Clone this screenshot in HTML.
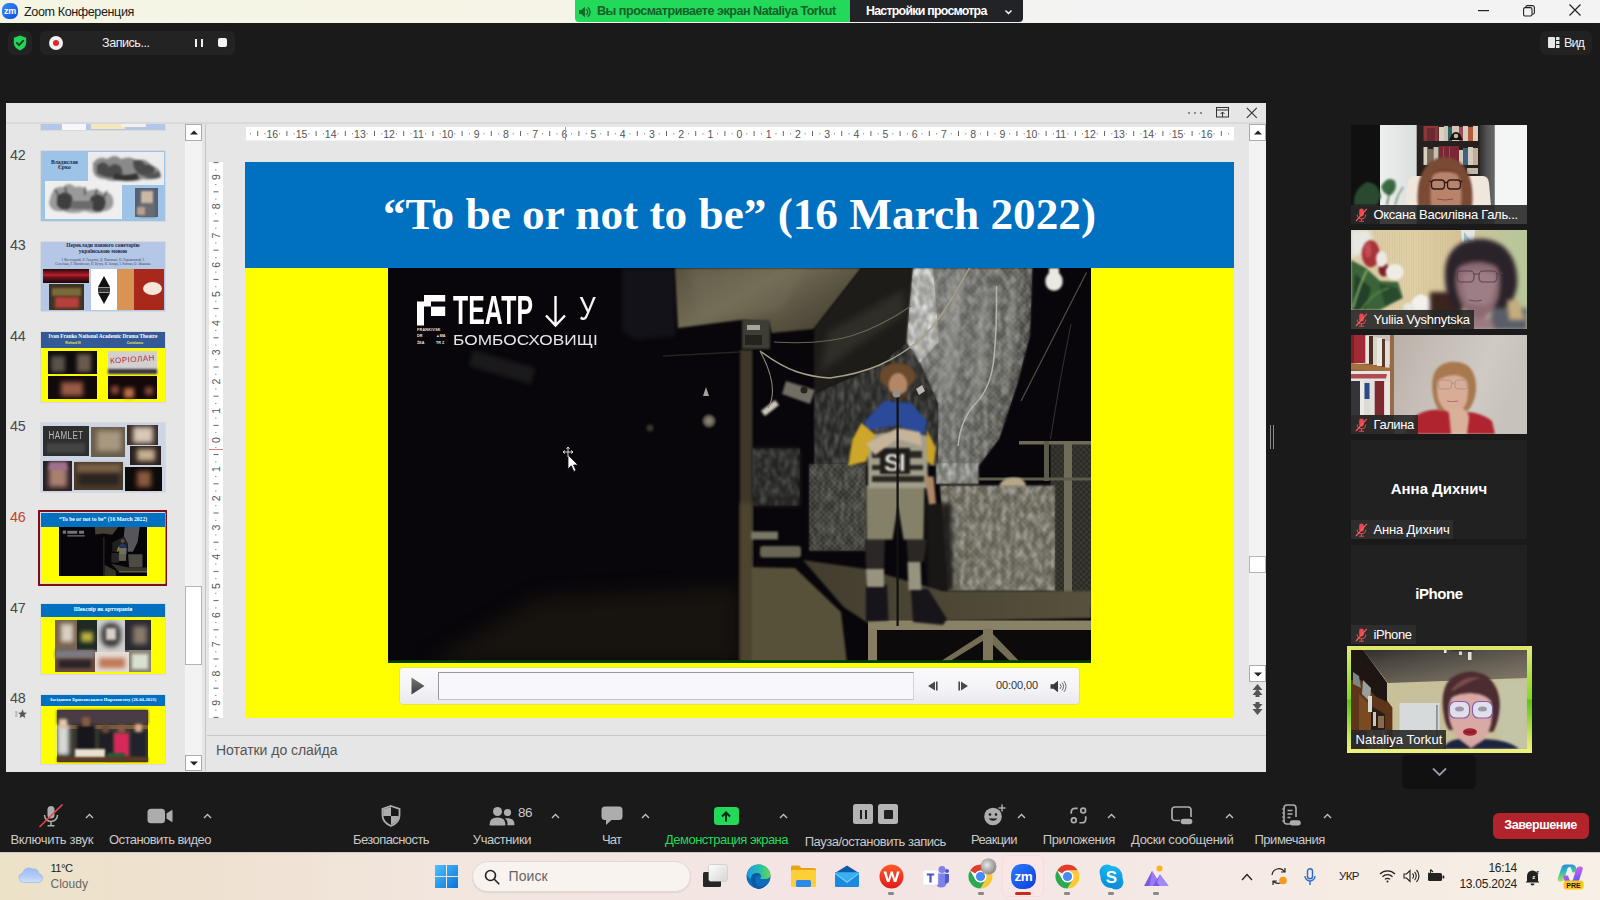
<!DOCTYPE html>
<html lang="ru"><head><meta charset="utf-8"><title>Zoom Конференция</title>
<style>
*{box-sizing:border-box;margin:0;padding:0}
html,body{width:1600px;height:900px;overflow:hidden;background:#1a1a1a;font-family:"Liberation Sans","DejaVu Sans",sans-serif;}
.abs,.abs *{position:absolute}
.t{white-space:nowrap;line-height:1}
.abs span,.abs br{position:static}
#titlebar{left:0;top:0;width:1600px;height:23px;background:linear-gradient(90deg,#f5f5e4 0,#f5f4e6 500px,#f3f3f3 1100px,#f3f3f3 100%)}
#banner{left:575px;top:0;width:275px;height:22px;background:#23d959;border-radius:0 0 0 4px}
#viewset{left:850px;top:0;width:173px;height:22px;background:#222326;border-radius:0 0 4px 0}
#share{left:6px;top:103px;width:1260px;height:669px;background:#e6e6e7;overflow:hidden}
#toolbar{left:0;top:790px;width:1600px;height:62px}
#taskbar{left:0;top:852px;width:1600px;height:48px;background:linear-gradient(90deg,#ece2c8 0,#efe1d0 200px,#f2e6df 450px,#f4e5e5 900px,#f5ebe4 1300px,#f6f0e6 100%)}
</style></head><body>
<div class="abs" style="left:0;top:0;width:1600px;height:900px">
<!--TITLEBAR-->
<div id="titlebar">
<svg style="left:2px;top:3px" width="16" height="16" viewBox="0 0 16 16"><defs><linearGradient id="zg" x1="0" y1="0" x2="1" y2="1"><stop offset="0" stop-color="#3b8bff"/><stop offset="1" stop-color="#0b4fe0"/></linearGradient></defs><rect width="16" height="16" rx="6.5" fill="url(#zg)"/><text x="8" y="11" font-size="9" letter-spacing="-0.300" font-weight="bold" fill="#fff" text-anchor="middle" font-family="Liberation Sans, sans-serif" style="position:static">zm</text></svg>
<div class="t" id="ttl" style="left:24px;top:5.800px;font-size:12.6px;color:#1a1a1a;letter-spacing:-0.4px">Zoom Конференция</div>
<svg style="left:1478px;top:10px" width="12" height="2"><rect width="11" height="1.2" fill="#222"/></svg>
<svg style="left:1523px;top:5px" width="12" height="12" viewBox="0 0 12 12" fill="none" stroke="#222" stroke-width="1.1"><rect x="0.6" y="2.6" width="8.4" height="8.4" rx="1.6"/><path d="M2.8 2.4V2.2a1.6 1.6 0 0 1 1.6-1.6h5a2 2 0 0 1 2 2v5a1.6 1.6 0 0 1-1.6 1.6H9.2"/></svg>
<svg style="left:1569px;top:4px" width="12" height="12" viewBox="0 0 12 12" stroke="#222" stroke-width="1.2"><path d="M0.5 0.5l11 11M11.500 0.500l-11 11"/></svg>
</div>
<!--BANNER-->
<div id="banner">
<svg style="left:3px;top:4.500px" width="14" height="14" viewBox="0 0 14 14"><path d="M1 5h2.3L7 1.8v10.400L3.300 9H1z" fill="#17672c"/><path d="M8.600 4.500a3.300 3.300 0 0 1 0 5M10.200 2.800a5.600 5.600 0 0 1 0 8.400" stroke="#17672c" stroke-width="1.300" fill="none" stroke-linecap="round"/></svg>
<div class="t" id="bt" style="left:22px;top:5px;font-size:12.6px;font-weight:bold;color:#15602a;letter-spacing:-0.5px">Вы просматриваете экран Nataliya Torkut</div>
</div>
<div id="viewset">
<div class="t" id="vs" style="left:16px;top:5px;font-size:12.4px;font-weight:bold;color:#fff;letter-spacing:-0.76px">Настройки просмотра</div>
<svg style="left:154px;top:8.500px" width="9" height="7" viewBox="0 0 9 7"><path d="M1.500 1.500l3 3 3-3" stroke="#fff" stroke-width="1.400" fill="none"/></svg>
</div>
<!--PILLS-->
<div style="left:8px;top:31px;width:24px;height:24px;background:#232323;border-radius:6px">
<svg style="left:5px;top:4px" width="14" height="16" viewBox="0 0 14 16"><path d="M7 0.600L13.200 2.800v5c0 3.600-2.600 6.200-6.200 7.600C3.400 14 0.800 11.400 0.800 7.800v-5z" fill="#26d35a"/><path d="M3.800 7.800l2.300 2.400 4.200-4.500" stroke="#0d3d1a" stroke-width="1.700" fill="none" stroke-linecap="round" stroke-linejoin="round"/></svg>
</div>
<div style="left:40px;top:31px;width:195px;height:24px;background:#232323;border-radius:6px">
<div style="left:9px;top:5px;width:14px;height:14px;border-radius:50%;background:#f2f2f2"></div>
<div style="left:13px;top:9px;width:6px;height:6px;border-radius:50%;background:#e02828"></div>
<div class="t" id="rec" style="left:62px;top:6.200px;font-size:12.6px;color:#f0f0f0;letter-spacing:-0.48px">Запись...</div>
<div style="left:155px;top:8px;width:2px;height:8px;background:#f0f0f0"></div>
<div style="left:161px;top:8px;width:2px;height:8px;background:#f0f0f0"></div>
<div style="left:178px;top:7px;width:9px;height:9px;border-radius:2px;background:#f4f4f4"></div>
</div>
<div style="left:1540px;top:31px;width:52px;height:24px;background:#222;border-radius:6px">
<svg style="left:8px;top:6px" width="12" height="11" viewBox="0 0 12 11"><rect x="0" y="0" width="7" height="11" rx="1" fill="#e8e8e8"/><rect x="8" y="0" width="3.500" height="3" rx="0.500" fill="#e8e8e8"/><rect x="8" y="4" width="3.500" height="3" rx="0.500" fill="#e8e8e8"/><rect x="8" y="8" width="3.500" height="3" rx="0.500" fill="#e8e8e8"/></svg>
<div class="t" id="vid" style="left:24px;top:6.200px;font-size:12.6px;color:#f0f0f0;letter-spacing:-0.93px">Вид</div>
</div>
<!--SHARE-->
<div id="share">
<div style="left:0px;top:19px;width:1260px;height:1.5px;background:#d9d9d9;"></div>
<svg style="left:1181px;top:8px" width="16" height="4"><circle cx="2" cy="2" r="1.100" fill="#777"/><circle cx="8" cy="2" r="1.100" fill="#777"/><circle cx="14" cy="2" r="1.100" fill="#777"/></svg>
<svg style="left:1210px;top:4px" width="14" height="12" viewBox="0 0 14 12" fill="none" stroke="#333" stroke-width="1"><rect x="0.5" y="0.5" width="12" height="9.500"/><path d="M0.5 3h12M6.500 10V5.200M4.500 7l2-2 2 2"/></svg>
<svg style="left:1240px;top:4px" width="12" height="12" viewBox="0 0 12 12" stroke="#333" stroke-width="1.100"><path d="M0.800 0.800l10 10M10.800 0.800l-10 10"/></svg>
<div style="left:179px;top:21px;width:17px;height:647px;background:#f3f3f3;"></div>
<div style="left:179px;top:21px;width:17px;height:16.5px;background:#fff;border:1px solid #ababab"></div>
<svg style="left:184px;top:27px" width="8" height="5"><path d="M0 4.500L4 0.500 8 4.500z" fill="#222"/></svg>
<div style="left:179px;top:483px;width:17px;height:79px;background:#fff;border:1px solid #b5b5b5"></div>
<div style="left:179px;top:651.5px;width:17px;height:16.5px;background:#fff;border:1px solid #ababab"></div>
<svg style="left:184px;top:658px" width="8" height="5"><path d="M0 0.500L4 4.500 8 0.500z" fill="#222"/></svg>
<div style="left:199px;top:21px;width:1.2px;height:647px;background:#c6c6c6;"></div>
<div style="left:1243px;top:21px;width:16.500px;height:558px;background:#f3f3f3;"></div>
<div style="left:1243px;top:21px;width:17px;height:16.5px;background:#fff;border:1px solid #ababab"></div>
<svg style="left:1247.500px;top:27px" width="8" height="5"><path d="M0 4.500L4 0.500 8 4.500z" fill="#222"/></svg>
<div style="left:1243px;top:453px;width:17px;height:17px;background:#fff;border:1px solid #b5b5b5"></div>
<div style="left:1243px;top:562px;width:17px;height:16.5px;background:#fff;border:1px solid #ababab"></div>
<svg style="left:1247.500px;top:568.500px" width="8" height="5"><path d="M0 0.500L4 4.500 8 0.500z" fill="#222"/></svg>
<svg style="left:1246px;top:581px" width="11" height="31" viewBox="0 0 11 31" fill="#555"><path d="M5.500 0L10.500 6H0.500zM5.500 5L10.500 11H0.500z"/><rect x="3.500" y="10" width="4" height="3"/><path d="M5.500 31L10.500 25H0.500zM5.500 26L10.500 20H0.500z"/><rect x="3.500" y="18" width="4" height="3"/></svg>
<div style="left:201px;top:632px;width:1059px;height:1px;background:#c8c8c8;"></div>
<div class="t" id="notes" style="left:210px;top:640px;font-size:14px;color:#555;letter-spacing:-0.04px">Нотатки до слайда</div>
<svg style="left:240px;top:24px" width="988" height="13.500" font-family="Liberation Sans, sans-serif" font-size="10.500" fill="#555"><rect width="988" height="13.500" fill="#fff"/>
<text x="26.3" y="11.200" text-anchor="middle" style="position:static">16</text>
<text x="55.5" y="11.200" text-anchor="middle" style="position:static">15</text>
<text x="84.7" y="11.200" text-anchor="middle" style="position:static">14</text>
<text x="113.9" y="11.200" text-anchor="middle" style="position:static">13</text>
<text x="143.1" y="11.200" text-anchor="middle" style="position:static">12</text>
<text x="172.3" y="11.200" text-anchor="middle" style="position:static">11</text>
<text x="201.5" y="11.200" text-anchor="middle" style="position:static">10</text>
<text x="230.7" y="11.200" text-anchor="middle" style="position:static">9</text>
<text x="259.9" y="11.200" text-anchor="middle" style="position:static">8</text>
<text x="289.1" y="11.200" text-anchor="middle" style="position:static">7</text>
<text x="318.3" y="11.200" text-anchor="middle" style="position:static">6</text>
<text x="347.5" y="11.200" text-anchor="middle" style="position:static">5</text>
<text x="376.7" y="11.200" text-anchor="middle" style="position:static">4</text>
<text x="405.9" y="11.200" text-anchor="middle" style="position:static">3</text>
<text x="435.1" y="11.200" text-anchor="middle" style="position:static">2</text>
<text x="464.3" y="11.200" text-anchor="middle" style="position:static">1</text>
<text x="493.5" y="11.200" text-anchor="middle" style="position:static">0</text>
<text x="522.7" y="11.200" text-anchor="middle" style="position:static">1</text>
<text x="551.9" y="11.200" text-anchor="middle" style="position:static">2</text>
<text x="581.1" y="11.200" text-anchor="middle" style="position:static">3</text>
<text x="610.3" y="11.200" text-anchor="middle" style="position:static">4</text>
<text x="639.5" y="11.200" text-anchor="middle" style="position:static">5</text>
<text x="668.7" y="11.200" text-anchor="middle" style="position:static">6</text>
<text x="697.9" y="11.200" text-anchor="middle" style="position:static">7</text>
<text x="727.1" y="11.200" text-anchor="middle" style="position:static">8</text>
<text x="756.3" y="11.200" text-anchor="middle" style="position:static">9</text>
<text x="785.5" y="11.200" text-anchor="middle" style="position:static">10</text>
<text x="814.7" y="11.200" text-anchor="middle" style="position:static">11</text>
<text x="843.9" y="11.200" text-anchor="middle" style="position:static">12</text>
<text x="873.1" y="11.200" text-anchor="middle" style="position:static">13</text>
<text x="902.3" y="11.200" text-anchor="middle" style="position:static">14</text>
<text x="931.5" y="11.200" text-anchor="middle" style="position:static">15</text>
<text x="960.7" y="11.200" text-anchor="middle" style="position:static">16</text>
<rect x="11.2" y="4" width="1" height="5" fill="#666"/>
<rect x="40.4" y="4" width="1" height="5" fill="#666"/>
<rect x="69.6" y="4" width="1" height="5" fill="#666"/>
<rect x="98.8" y="4" width="1" height="5" fill="#666"/>
<rect x="128.0" y="4" width="1" height="5" fill="#666"/>
<rect x="157.2" y="4" width="1" height="5" fill="#666"/>
<rect x="186.4" y="4" width="1" height="5" fill="#666"/>
<rect x="215.6" y="4" width="1" height="5" fill="#666"/>
<rect x="244.8" y="4" width="1" height="5" fill="#666"/>
<rect x="274.0" y="4" width="1" height="5" fill="#666"/>
<rect x="303.2" y="4" width="1" height="5" fill="#666"/>
<rect x="332.4" y="4" width="1" height="5" fill="#666"/>
<rect x="361.6" y="4" width="1" height="5" fill="#666"/>
<rect x="390.8" y="4" width="1" height="5" fill="#666"/>
<rect x="420.0" y="4" width="1" height="5" fill="#666"/>
<rect x="449.2" y="4" width="1" height="5" fill="#666"/>
<rect x="478.4" y="4" width="1" height="5" fill="#666"/>
<rect x="507.6" y="4" width="1" height="5" fill="#666"/>
<rect x="536.8" y="4" width="1" height="5" fill="#666"/>
<rect x="566.0" y="4" width="1" height="5" fill="#666"/>
<rect x="595.2" y="4" width="1" height="5" fill="#666"/>
<rect x="624.4" y="4" width="1" height="5" fill="#666"/>
<rect x="653.6" y="4" width="1" height="5" fill="#666"/>
<rect x="682.8" y="4" width="1" height="5" fill="#666"/>
<rect x="712.0" y="4" width="1" height="5" fill="#666"/>
<rect x="741.2" y="4" width="1" height="5" fill="#666"/>
<rect x="770.4" y="4" width="1" height="5" fill="#666"/>
<rect x="799.6" y="4" width="1" height="5" fill="#666"/>
<rect x="828.8" y="4" width="1" height="5" fill="#666"/>
<rect x="858.0" y="4" width="1" height="5" fill="#666"/>
<rect x="887.2" y="4" width="1" height="5" fill="#666"/>
<rect x="916.4" y="4" width="1" height="5" fill="#666"/>
<rect x="945.6" y="4" width="1" height="5" fill="#666"/>
<rect x="974.8" y="4" width="1" height="5" fill="#666"/>
<rect x="3.9" y="6" width="1" height="1.500" fill="#999"/>
<rect x="18.5" y="6" width="1" height="1.500" fill="#999"/>
<rect x="33.1" y="6" width="1" height="1.500" fill="#999"/>
<rect x="47.7" y="6" width="1" height="1.500" fill="#999"/>
<rect x="62.3" y="6" width="1" height="1.500" fill="#999"/>
<rect x="76.9" y="6" width="1" height="1.500" fill="#999"/>
<rect x="91.5" y="6" width="1" height="1.500" fill="#999"/>
<rect x="106.1" y="6" width="1" height="1.500" fill="#999"/>
<rect x="120.7" y="6" width="1" height="1.500" fill="#999"/>
<rect x="135.3" y="6" width="1" height="1.500" fill="#999"/>
<rect x="149.9" y="6" width="1" height="1.500" fill="#999"/>
<rect x="164.5" y="6" width="1" height="1.500" fill="#999"/>
<rect x="179.1" y="6" width="1" height="1.500" fill="#999"/>
<rect x="193.7" y="6" width="1" height="1.500" fill="#999"/>
<rect x="208.3" y="6" width="1" height="1.500" fill="#999"/>
<rect x="222.9" y="6" width="1" height="1.500" fill="#999"/>
<rect x="237.5" y="6" width="1" height="1.500" fill="#999"/>
<rect x="252.1" y="6" width="1" height="1.500" fill="#999"/>
<rect x="266.7" y="6" width="1" height="1.500" fill="#999"/>
<rect x="281.3" y="6" width="1" height="1.500" fill="#999"/>
<rect x="295.9" y="6" width="1" height="1.500" fill="#999"/>
<rect x="310.5" y="6" width="1" height="1.500" fill="#999"/>
<rect x="325.1" y="6" width="1" height="1.500" fill="#999"/>
<rect x="339.7" y="6" width="1" height="1.500" fill="#999"/>
<rect x="354.3" y="6" width="1" height="1.500" fill="#999"/>
<rect x="368.9" y="6" width="1" height="1.500" fill="#999"/>
<rect x="383.5" y="6" width="1" height="1.500" fill="#999"/>
<rect x="398.1" y="6" width="1" height="1.500" fill="#999"/>
<rect x="412.7" y="6" width="1" height="1.500" fill="#999"/>
<rect x="427.3" y="6" width="1" height="1.500" fill="#999"/>
<rect x="441.9" y="6" width="1" height="1.500" fill="#999"/>
<rect x="456.5" y="6" width="1" height="1.500" fill="#999"/>
<rect x="471.1" y="6" width="1" height="1.500" fill="#999"/>
<rect x="485.7" y="6" width="1" height="1.500" fill="#999"/>
<rect x="500.3" y="6" width="1" height="1.500" fill="#999"/>
<rect x="514.9" y="6" width="1" height="1.500" fill="#999"/>
<rect x="529.5" y="6" width="1" height="1.500" fill="#999"/>
<rect x="544.1" y="6" width="1" height="1.500" fill="#999"/>
<rect x="558.7" y="6" width="1" height="1.500" fill="#999"/>
<rect x="573.3" y="6" width="1" height="1.500" fill="#999"/>
<rect x="587.9" y="6" width="1" height="1.500" fill="#999"/>
<rect x="602.5" y="6" width="1" height="1.500" fill="#999"/>
<rect x="617.1" y="6" width="1" height="1.500" fill="#999"/>
<rect x="631.7" y="6" width="1" height="1.500" fill="#999"/>
<rect x="646.3" y="6" width="1" height="1.500" fill="#999"/>
<rect x="660.9" y="6" width="1" height="1.500" fill="#999"/>
<rect x="675.5" y="6" width="1" height="1.500" fill="#999"/>
<rect x="690.1" y="6" width="1" height="1.500" fill="#999"/>
<rect x="704.7" y="6" width="1" height="1.500" fill="#999"/>
<rect x="719.3" y="6" width="1" height="1.500" fill="#999"/>
<rect x="733.9" y="6" width="1" height="1.500" fill="#999"/>
<rect x="748.5" y="6" width="1" height="1.500" fill="#999"/>
<rect x="763.1" y="6" width="1" height="1.500" fill="#999"/>
<rect x="777.7" y="6" width="1" height="1.500" fill="#999"/>
<rect x="792.3" y="6" width="1" height="1.500" fill="#999"/>
<rect x="806.9" y="6" width="1" height="1.500" fill="#999"/>
<rect x="821.5" y="6" width="1" height="1.500" fill="#999"/>
<rect x="836.1" y="6" width="1" height="1.500" fill="#999"/>
<rect x="850.7" y="6" width="1" height="1.500" fill="#999"/>
<rect x="865.3" y="6" width="1" height="1.500" fill="#999"/>
<rect x="879.9" y="6" width="1" height="1.500" fill="#999"/>
<rect x="894.5" y="6" width="1" height="1.500" fill="#999"/>
<rect x="909.1" y="6" width="1" height="1.500" fill="#999"/>
<rect x="923.7" y="6" width="1" height="1.500" fill="#999"/>
<rect x="938.3" y="6" width="1" height="1.500" fill="#999"/>
<rect x="952.9" y="6" width="1" height="1.500" fill="#999"/>
<rect x="967.5" y="6" width="1" height="1.500" fill="#999"/>
<rect x="982.1" y="6" width="1" height="1.500" fill="#999"/>
<rect x="319" y="0" width="1" height="13.500" fill="#e08080"/>
</svg>
<svg style="left:203px;top:59px" width="14" height="556" font-family="Liberation Sans, sans-serif" font-size="10.500" fill="#555"><rect width="14" height="556" fill="#fff"/>
<text transform="translate(11.200,15.2) rotate(-90)" text-anchor="middle" style="position:static">9</text>
<text transform="translate(11.200,44.4) rotate(-90)" text-anchor="middle" style="position:static">8</text>
<text transform="translate(11.200,73.6) rotate(-90)" text-anchor="middle" style="position:static">7</text>
<text transform="translate(11.200,102.8) rotate(-90)" text-anchor="middle" style="position:static">6</text>
<text transform="translate(11.200,132.0) rotate(-90)" text-anchor="middle" style="position:static">5</text>
<text transform="translate(11.200,161.2) rotate(-90)" text-anchor="middle" style="position:static">4</text>
<text transform="translate(11.200,190.4) rotate(-90)" text-anchor="middle" style="position:static">3</text>
<text transform="translate(11.200,219.6) rotate(-90)" text-anchor="middle" style="position:static">2</text>
<text transform="translate(11.200,248.8) rotate(-90)" text-anchor="middle" style="position:static">1</text>
<text transform="translate(11.200,278.0) rotate(-90)" text-anchor="middle" style="position:static">0</text>
<text transform="translate(11.200,307.2) rotate(-90)" text-anchor="middle" style="position:static">1</text>
<text transform="translate(11.200,336.4) rotate(-90)" text-anchor="middle" style="position:static">2</text>
<text transform="translate(11.200,365.6) rotate(-90)" text-anchor="middle" style="position:static">3</text>
<text transform="translate(11.200,394.8) rotate(-90)" text-anchor="middle" style="position:static">4</text>
<text transform="translate(11.200,424.0) rotate(-90)" text-anchor="middle" style="position:static">5</text>
<text transform="translate(11.200,453.2) rotate(-90)" text-anchor="middle" style="position:static">6</text>
<text transform="translate(11.200,482.4) rotate(-90)" text-anchor="middle" style="position:static">7</text>
<text transform="translate(11.200,511.6) rotate(-90)" text-anchor="middle" style="position:static">8</text>
<text transform="translate(11.200,540.8) rotate(-90)" text-anchor="middle" style="position:static">9</text>
<rect x="4.500" y="0.1" width="5" height="1" fill="#666"/>
<rect x="4.500" y="29.3" width="5" height="1" fill="#666"/>
<rect x="4.500" y="58.5" width="5" height="1" fill="#666"/>
<rect x="4.500" y="87.7" width="5" height="1" fill="#666"/>
<rect x="4.500" y="116.9" width="5" height="1" fill="#666"/>
<rect x="4.500" y="146.1" width="5" height="1" fill="#666"/>
<rect x="4.500" y="175.3" width="5" height="1" fill="#666"/>
<rect x="4.500" y="204.5" width="5" height="1" fill="#666"/>
<rect x="4.500" y="233.7" width="5" height="1" fill="#666"/>
<rect x="4.500" y="262.9" width="5" height="1" fill="#666"/>
<rect x="4.500" y="292.1" width="5" height="1" fill="#666"/>
<rect x="4.500" y="321.3" width="5" height="1" fill="#666"/>
<rect x="4.500" y="350.5" width="5" height="1" fill="#666"/>
<rect x="4.500" y="379.7" width="5" height="1" fill="#666"/>
<rect x="4.500" y="408.9" width="5" height="1" fill="#666"/>
<rect x="4.500" y="438.1" width="5" height="1" fill="#666"/>
<rect x="4.500" y="467.3" width="5" height="1" fill="#666"/>
<rect x="4.500" y="496.5" width="5" height="1" fill="#666"/>
<rect x="4.500" y="525.7" width="5" height="1" fill="#666"/>
<rect x="4.500" y="554.9" width="5" height="1" fill="#666"/>
<rect x="6" y="7.4" width="1.500" height="1" fill="#999"/>
<rect x="6" y="22.0" width="1.500" height="1" fill="#999"/>
<rect x="6" y="36.6" width="1.500" height="1" fill="#999"/>
<rect x="6" y="51.2" width="1.500" height="1" fill="#999"/>
<rect x="6" y="65.8" width="1.500" height="1" fill="#999"/>
<rect x="6" y="80.4" width="1.500" height="1" fill="#999"/>
<rect x="6" y="95.0" width="1.500" height="1" fill="#999"/>
<rect x="6" y="109.6" width="1.500" height="1" fill="#999"/>
<rect x="6" y="124.2" width="1.500" height="1" fill="#999"/>
<rect x="6" y="138.8" width="1.500" height="1" fill="#999"/>
<rect x="6" y="153.4" width="1.500" height="1" fill="#999"/>
<rect x="6" y="168.0" width="1.500" height="1" fill="#999"/>
<rect x="6" y="182.6" width="1.500" height="1" fill="#999"/>
<rect x="6" y="197.2" width="1.500" height="1" fill="#999"/>
<rect x="6" y="211.8" width="1.500" height="1" fill="#999"/>
<rect x="6" y="226.4" width="1.500" height="1" fill="#999"/>
<rect x="6" y="241.0" width="1.500" height="1" fill="#999"/>
<rect x="6" y="255.6" width="1.500" height="1" fill="#999"/>
<rect x="6" y="270.2" width="1.500" height="1" fill="#999"/>
<rect x="6" y="284.8" width="1.500" height="1" fill="#999"/>
<rect x="6" y="299.4" width="1.500" height="1" fill="#999"/>
<rect x="6" y="314.0" width="1.500" height="1" fill="#999"/>
<rect x="6" y="328.6" width="1.500" height="1" fill="#999"/>
<rect x="6" y="343.2" width="1.500" height="1" fill="#999"/>
<rect x="6" y="357.8" width="1.500" height="1" fill="#999"/>
<rect x="6" y="372.4" width="1.500" height="1" fill="#999"/>
<rect x="6" y="387.0" width="1.500" height="1" fill="#999"/>
<rect x="6" y="401.6" width="1.500" height="1" fill="#999"/>
<rect x="6" y="416.2" width="1.500" height="1" fill="#999"/>
<rect x="6" y="430.8" width="1.500" height="1" fill="#999"/>
<rect x="6" y="445.4" width="1.500" height="1" fill="#999"/>
<rect x="6" y="460.0" width="1.500" height="1" fill="#999"/>
<rect x="6" y="474.6" width="1.500" height="1" fill="#999"/>
<rect x="6" y="489.2" width="1.500" height="1" fill="#999"/>
<rect x="6" y="503.8" width="1.500" height="1" fill="#999"/>
<rect x="6" y="518.4" width="1.500" height="1" fill="#999"/>
<rect x="6" y="533.0" width="1.500" height="1" fill="#999"/>
<rect x="6" y="547.6" width="1.500" height="1" fill="#999"/>
<rect x="0" y="287" width="14" height="1" fill="#e08080"/>
</svg>
<div id="slide" style="left:239px;top:59px;width:989px;height:556px;background:#ffff00;overflow:hidden">
<div style="left:0;top:0;width:989px;height:106px;background:#0070c0"></div>
<div class="t" id="stitle" style="left:0;top:29.500px;width:989px;text-align:center;font-family:'Liberation Serif',serif;font-weight:bold;font-size:45.250px;color:#fff">“To be or not to be” (16 March 2022)</div>
<div id="video" style="left:143px;top:106px;width:703px;height:395px;background:#09060b;overflow:hidden">
<svg id="scene" style="left:0;top:0" width="703" height="395" viewBox="0 0 703 395">
<defs>
<filter id="b1" color-interpolation-filters="sRGB" x="-10%" y="-10%" width="120%" height="120%"><feGaussianBlur stdDeviation="1.100"/></filter>
<filter id="b2" color-interpolation-filters="sRGB" x="-10%" y="-10%" width="120%" height="120%"><feGaussianBlur stdDeviation="2"/></filter>
<filter id="b3" color-interpolation-filters="sRGB" x="-15%" y="-15%" width="130%" height="130%"><feGaussianBlur stdDeviation="3.500"/></filter>
<filter id="b8" color-interpolation-filters="sRGB" x="-20%" y="-20%" width="140%" height="140%"><feGaussianBlur stdDeviation="9"/></filter>
<filter id="foil" color-interpolation-filters="sRGB" x="0" y="0" width="100%" height="100%"><feTurbulence type="fractalNoise" baseFrequency="0.220 0.110" numOctaves="3" seed="11" result="n"/><feColorMatrix in="n" type="matrix" values="0 0 0 0 1  0 0 0 0 1  0 0 0 0 1  2.200 0 0 0 -0.800" result="m"/><feGaussianBlur in="m" stdDeviation="0.900" result="mb"/><feComposite in="mb" in2="SourceGraphic" operator="in"/></filter>
<filter id="foil2" color-interpolation-filters="sRGB" x="0" y="0" width="100%" height="100%"><feTurbulence type="fractalNoise" baseFrequency="0.300 0.090" numOctaves="3" seed="4" result="n"/><feColorMatrix in="n" type="matrix" values="0 0 0 0 1  0 0 0 0 1  0 0 0 0 1  2.200 0 0 0 -0.850" result="m"/><feGaussianBlur in="m" stdDeviation="1" result="mb"/><feComposite in="mb" in2="SourceGraphic" operator="in"/></filter>
<linearGradient id="ductg" x1="0" y1="0" x2="1" y2="0.300"><stop offset="0" stop-color="#6c6c69"/><stop offset="0.450" stop-color="#62625f"/><stop offset="0.800" stop-color="#55554f"/><stop offset="1" stop-color="#3c3c39"/></linearGradient>
<linearGradient id="ceilg" x1="0" y1="0" x2="1" y2="0.600"><stop offset="0" stop-color="#57523f"/><stop offset="0.450" stop-color="#726c56"/><stop offset="1" stop-color="#474233"/></linearGradient>
<linearGradient id="platg" x1="0" y1="0" x2="1" y2="0"><stop offset="0" stop-color="#423d2e"/><stop offset="1" stop-color="#57523d"/></linearGradient>
<pattern id="mesh" width="4" height="4" patternUnits="userSpaceOnUse" patternTransform="rotate(45)"><path d="M0 0H4M0 0V4" stroke="#8a8878" stroke-width="0.500" opacity="0.550"/></pattern>
</defs>
<rect width="703" height="395" fill="#08060a"/>
<path d="M40 395L150 330 352 318V395z" fill="#17130f" filter="url(#b8)"/>
<path d="M234 0h53v68l-38 4-15-8z" fill="#141219" filter="url(#b2)"/>
<path d="M85 82l62 18-4 16-62-18z" fill="#1a1a1b" filter="url(#b2)"/>
<path d="M287 0H473.500L426 61 383.500 65 381 54 352 52 290 60z" fill="url(#ceilg)" filter="url(#b1)"/>
<path d="M300 2h120l-28 40-80 8z" fill="#77725b" opacity="0.350" filter="url(#b3)"/>
<path d="M473.500 0H525L518.500 74 491.500 97 426 126V61z" fill="#1d1c19" filter="url(#b1)"/>
<path d="M440 64L515 22 517 46 432 104z" fill="#3b3a33" opacity="0.600" filter="url(#b3)"/>
<path d="M426 126L491.500 97 518.500 74 532 94.500 550 135V198H426z" fill="#262624" filter="url(#b1)"/>
<path d="M426 126L491.500 97 518.500 74 532 94.500 550 135V198H426z" fill="#6a6a64" filter="url(#foil2)" opacity="0.280"/>
<path d="M543 0H644.500L642 67.500 629 117 611 171 590.500 198H550V135L532 94.500 550 74z" fill="url(#ductg)" filter="url(#b1)"/>
<path d="M543 0H644.500L642 67.500 629 117 611 171 590.500 198H550V135L532 94.500 550 74z" fill="url(#mesh)"/>
<path d="M543 0H644.500L642 67.500 629 117 611 171 590.500 198H550V135L532 94.500 550 74z" fill="#d6d6d0" filter="url(#foil)" opacity="0.380"/>
<path d="M560 10L575 6 566 120 552 128zM592 30l10-4-6 90-14 40zM622 20l8 0-4 70-12 40z" fill="#b4b4ae" opacity="0.350" filter="url(#b2)"/>
<path d="M525 0H545L551 74 532 95 518.500 74z" fill="#9a9a96" filter="url(#b1)"/>
<path d="M525 0H545L551 74 532 95 518.500 74z" fill="#f4f4f0" filter="url(#foil)" opacity="0.800"/>
<path d="M698.500 4.500L633 133" stroke="#56534a" stroke-width="1.100" fill="none"/>
<path d="M683 56Q672 110 662.500 171" stroke="#34322d" stroke-width="1" fill="none"/>
<path d="M662.500 175H703V339H662.500z" fill="#2c2b25"/>
<path d="M662.500 175H703V339H662.500z" fill="url(#mesh)"/>
<path d="M631 173H703v3.500H631z" fill="#6d6a58"/>
<rect x="676" y="173" width="8" height="166" fill="#6f6c5a"/><rect x="656" y="173" width="5" height="40" fill="#5c5a4a"/>
<path d="M552 217.500H667V323H560z" fill="#615e52" filter="url(#b1)"/>
<path d="M552 217.500H667V323H560z" fill="url(#mesh)"/>
<path d="M552 217.500H667V323H560z" fill="#d4d2c6" filter="url(#foil)" opacity="0.450"/>
<path d="M548 195H590.500V216H548z" fill="#74746e" filter="url(#b1)"/><path d="M548 195H590.500V216H548z" fill="#e0e0da" filter="url(#foil)" opacity="0.600"/>
<rect x="590" y="209.500" width="113" height="3" fill="#5d5b4b"/>
<path d="M611 218.500q3-9 14-9 12-1 13 9z" fill="#b6a78a" filter="url(#b1)"/>
<path d="M536.500 235H563L566 323H540z" fill="#1b1917" filter="url(#b2)" opacity="0.900"/>
<path d="M421 196H478V283H421z" fill="#34342f" filter="url(#b1)"/><path d="M421 196H478V283H421z" fill="url(#mesh)"/><path d="M421 196H478V283H421z" fill="#8e8e86" filter="url(#foil2)" opacity="0.260"/>
<path d="M364 180h48v58H364z" fill="#242422" filter="url(#b2)"/><path d="M364 180h48v58H364z" fill="#b0b0a8" filter="url(#foil)" opacity="0.200"/>

<rect x="352" y="82" width="12.500" height="313" fill="#3f3727" filter="url(#b1)"/><rect x="352" y="235" width="12.500" height="160" fill="#4d4530" filter="url(#b2)"/>
<rect x="354" y="52" width="28" height="29" fill="#3f3e36" filter="url(#b1)"/><rect x="359" y="57" width="13" height="5" fill="#a5a59c"/><rect x="357" y="67" width="17" height="10" fill="#24241f"/>
<path d="M373 143l14-11 4 5-14 11z" fill="#cbc8ba" filter="url(#b1)"/>
<path d="M398 113l29 9-5 14-28-10z" fill="#716e64" filter="url(#b1)"/><circle cx="416" cy="122" r="3.500" fill="#26241f"/>
<circle cx="321" cy="153" r="6.500" fill="#5e5a4f" filter="url(#b1)"/><circle cx="321" cy="153" r="3.500" fill="#85816f" filter="url(#b1)"/>
<circle cx="262" cy="160" r="3.500" fill="#37352f" filter="url(#b1)"/>
<path d="M315 128l3-9 3 9z" fill="#a6a498"/>
<path d="M581.500 0Q566 28 554.500 45T532 72Q512 88 491.500 97T442 110Q424 109 408 103.500T372 83" stroke="#a8a088" stroke-width="1.400" fill="none"/>
<path d="M523 38Q494 58 464.500 67.500T386 74" stroke="#6a6553" stroke-width="1.100" fill="none"/>
<path d="M372 83Q392 120 380 140" stroke="#8b8573" stroke-width="1.100" fill="none"/>
<path d="M608.500 18Q609 60 606 90T588 135 570 178" stroke="#b5b5ae" stroke-width="1.500" fill="none"/>
<path d="M275 88L352 84" stroke="#26241f" stroke-width="1.500"/>
<path d="M661 0h10v5q4.500 4 3.500 10.500a8.600 8.600 0 0 1-17 0Q656.500 9 661 5z" fill="#ebe8e2" filter="url(#b1)"/>
<path d="M363 299L407 300 453 344 459 395H363z" fill="#575139" filter="url(#b1)"/>
<path d="M415 292L478 301 554.500 323H703V350L480 355 455.500 339z" fill="url(#platg)" filter="url(#b1)"/>
<rect x="363" y="263.500" width="27" height="8" fill="#7a7866" filter="url(#b1)"/><rect x="372" y="278" width="41" height="11.500" rx="3" fill="#6a6656" filter="url(#b1)"/>
<rect x="480" y="363" width="223" height="32" fill="#0c0a0a"/>
<path d="M595 366L550 395h9L603 368zM605 366L633 395h-9L598 370z" fill="#746d55"/>
<rect x="480" y="352.500" width="223" height="9.500" fill="#8a8266"/>
<rect x="480" y="361" width="9" height="34" fill="#857d62"/><rect x="595" y="361" width="10" height="34" fill="#7d755c"/>
<g filter="url(#b1)">
<path d="M478 316.500h21l1.500 36-22.500 1zM523 321h17l19 30-4 6-30-3z" fill="#17151a"/>
<path d="M478 301h18v18h-17zM519.500 294h13l1 28h-13z" fill="#97937e"/>
<path d="M477 271.500h20l-1 29.500h-18zM518.500 271.500H539l-3 22.500h-16z" fill="#2b2724"/>
<path d="M478 217.500h58.500l-1 54h-20l-5.500-34-5.500 34h-26z" fill="#858169"/>
<path d="M480 168q29-8 59 0l1 52h-60z" fill="#a19d8a"/>
<path d="M484 183h50v7h-50zM484 197h51v5h-51zM484 208h52v6h-52z" fill="#2a2823"/>
<path d="M492 180h30v26h-30z" fill="#1f1d1a"/>
<text x="496" y="203" font-size="24" font-weight="bold" fill="#e8e6dc" font-family="Liberation Sans, sans-serif" style="position:static" letter-spacing="-1">SI</text>
<path d="M477 153L496 133 523 135 539 153 536.500 166.500 509.500 157.500 478 162z" fill="#2b4a9a"/>
<path d="M473.500 155L487 166.500 478 193.500 460 198 464.500 171z" fill="#cda72a"/>
<path d="M539 162L548 180 545.500 198 539 193.500z" fill="#c9a227"/>
<path d="M478 175.500L509.500 160 532 164 534 178 509.500 171 487 187z" fill="#c6b49a"/>
<path d="M536.500 208.500h9l2.500 27-7 1z" fill="#ad8868"/>
<ellipse cx="509.500" cy="108" rx="18" ry="13" fill="#6a4a2c"/>
<ellipse cx="510" cy="118" rx="9.500" ry="13" fill="#b48766"/>
<path d="M501 122q9 9 18 0v7q-9 6-18 0z" fill="#4b3421"/>
</g>
<rect x="508.500" y="128" width="2.200" height="230" fill="#141210"/>
<ellipse cx="508.500" cy="126" rx="4" ry="3.500" fill="#90908c"/>
<path d="M528 121l6-4 3 6-6 4z" fill="#bab7ac"/>
<rect x="0" y="392.200" width="703" height="2.800" fill="#003e00"/>
<g transform="translate(180,187)"><path d="M0 0v14l3.300-3.200 2.500 5.600 2.200-1-2.500-5.400H10z" fill="#fff" stroke="#111" stroke-width="0.800"/><path d="M-5 -3h10M0 -8v10M-5 -3l2-1.500M-5 -3l2 1.500M5 -3l-2-1.500M5 -3l-2 1.500M0 -8l-1.500 2M0 -8l1.500 2" stroke="#e8e8e8" stroke-width="0.900" fill="none"/></g>
</svg>
<div id="logo" style="left:0;top:0;width:220px;height:90px">
<svg style="left:28.900px;top:27.200px" width="29" height="52" viewBox="0 0 29 52" fill="#fff"><path d="M7 0H28.200V6.600H14V11.600H7V30.400H0V6.600H7z"/><path d="M14 11.600H28.200V21H14z"/><text x="0" y="35.600" font-size="3.700" font-weight="bold" font-family="Liberation Sans, sans-serif" style="position:static" letter-spacing="0.250" fill="#e8e8e8">FRANKIVSK</text><text x="0" y="42.300" font-size="3.700" font-weight="bold" font-family="Liberation Sans, sans-serif" style="position:static" fill="#e8e8e8">DR</text><text x="19" y="42.300" font-size="3.700" font-weight="bold" font-family="Liberation Sans, sans-serif" style="position:static" fill="#e8e8e8">▲MA</text><text x="0" y="49.200" font-size="3.700" font-weight="bold" font-family="Liberation Sans, sans-serif" style="position:static" fill="#e8e8e8">ŻEA</text><text x="19" y="49.200" font-size="3.700" font-weight="bold" font-family="Liberation Sans, sans-serif" style="position:static" fill="#e8e8e8">TR Z</text></svg>
<div class="t" id="lg1" style="left:64.500px;top:21.500px;font-size:40.500px;font-weight:bold;color:#fff;transform-origin:0 0;transform:scaleX(0.612)">ТЕАТР</div>
<svg style="left:157px;top:28px" width="21" height="32" viewBox="0 0 21 32" fill="none" stroke="#fff" stroke-width="2.400"><path d="M10.500 0v29M1 19.500L10.500 29.500 20 19.500"/></svg>

<div class="t" id="lgu" style="left:191px;top:24.500px;font-size:32.800px;color:#f2f2f2;transform-origin:0 0;transform:scaleX(0.800)">У</div>
<div class="t" id="lg2" style="left:65px;top:63.500px;font-size:15px;color:#e6e6e6;transform-origin:0 0;transform:scaleX(1.150);letter-spacing:0.050px">БОМБОСХОВИЩІ</div>
</div>
</div>
<div id="ctrl" style="left:155px;top:505.500px;width:679px;height:36.500px;border-radius:3px;background:linear-gradient(180deg,#fafafd 0,#f4f4f8 55%,#e9e9ee 100%);box-shadow:0 0 0 0.500px #c9c9b0">
<svg style="left:11px;top:9.500px" width="14" height="18" viewBox="0 0 14 18"><defs><linearGradient id="pg" x1="0" y1="0" x2="0" y2="1"><stop offset="0" stop-color="#777"/><stop offset="1" stop-color="#3c3c3c"/></linearGradient></defs><path d="M0.500 0.500L13.500 9 0.500 17.500z" fill="url(#pg)"/></svg>
<div style="left:37.500px;top:4px;width:476px;height:28.500px;background:#f8f8fc;border:1px solid #9a9a9a;border-right-color:#d4d4d8;border-bottom-color:#c4c4c8"></div>
<svg style="left:527px;top:13.500px" width="11" height="10" viewBox="0 0 11 10"><path d="M8 0.500v9L1 5z" fill="#4a4a4a"/><rect x="9" y="0.500" width="1.600" height="9" fill="#4a4a4a"/></svg>
<svg style="left:558px;top:13.500px" width="11" height="10" viewBox="0 0 11 10"><path d="M3 0.500v9L10 5z" fill="#4a4a4a"/><rect x="0.400" y="0.500" width="1.600" height="9" fill="#4a4a4a"/></svg>
<div class="t" id="tm" style="left:596px;top:12.500px;font-size:11px;color:#333;letter-spacing:-0.11px">00:00,00</div>
<svg style="left:650px;top:12px" width="17" height="13" viewBox="0 0 17 13"><path d="M0.500 4.200h3L8 0.800v11.400L3.500 8.800h-3z" fill="#3a3a3a"/><path d="M10 4a3.600 3.600 0 0 1 0 5M12 2.500a6 6 0 0 1 0 8M14 1.200a8 8 0 0 1 0 10.600" stroke="#666" stroke-width="1" fill="none"/></svg>
</div>
</div>
<div id="thumbs" style="left:0;top:20.500px;width:179px;height:648px;overflow:hidden"><div style="left:0;top:-20.500px;width:179px;height:668px"><div class="t" style="left:4px;top:-45.8px;font-size:14.300px;color:#484848;letter-spacing:-0.200px"></div><div style="left:35px;top:-42.3px;width:123.600px;height:69.700px;overflow:hidden;box-shadow:0 0 0 0.600px #d0d0d0"><div style="left:0px;top:0px;width:124px;height:70px;background:#b4c7e7;"></div><div style="left:21px;top:52px;width:24px;height:18px;background:#f7f7fb;"></div><div style="left:50px;top:54px;width:34px;height:14px;background:#f6e6bc;"></div><div style="left:80px;top:50px;width:25px;height:16px;background:#f4f0ee;"></div></div>
<div class="t" style="left:4px;top:44.5px;font-size:14.300px;color:#484848;letter-spacing:-0.200px">42</div><div style="left:35px;top:48px;width:123.600px;height:69.700px;overflow:hidden;box-shadow:0 0 0 0.600px #d0d0d0"><div style="left:0px;top:0px;width:124px;height:70px;background:#9dc3e6;"></div><div class="t" style="left:0px;top:8.5px;width:47px;text-align:center;font-family:'Liberation Serif',serif;font-weight:bold;font-size:5.6px;color:#1f2a44;line-height:1.05;white-space:normal">Владислав<br>Єрко</div><svg style="left:0;top:0" width="124" height="70" viewBox="0 0 124 70"><rect x="47" y="1" width="76" height="33" fill="#ececec"/><rect x="4" y="30" width="77" height="38" fill="#efefef"/>
<g filter="url(#tb1)"><path d="M52 12q6-8 14-4 8-6 14 0 10-4 16 2 8-4 14 4 8 2 10 10-8 6-18 4-10 4-20 0-10 4-18 0-10 0-12-8z" fill="#8a8a8a"/><path d="M56 14q8-6 12 2 6-6 12 0 4 8-4 10-10 2-20-4zM92 10q8-4 12 4 8-2 10 6-6 6-14 4-8-4-8-14z" fill="#4a4a4a"/><path d="M74 22q10 4 22 0l2 6q-12 4-26 0z" fill="#333"/><path d="M104 22q8 2 14-2l2 6q-8 4-16 0z" fill="#555"/>
<path d="M10 44q4-10 12-8 6-6 12 0 8-2 12 4 10-4 16 2 8-2 10 6 2 10-8 12-10 4-20 0-12 4-22 0-12 2-14-8z" fill="#9a9a9a"/><path d="M16 46q6-8 14-2 4 8-2 14-8 2-12-4zM50 46q8-6 14 2 2 8-4 12-8 2-12-6z" fill="#3e3e3e"/><path d="M30 50h22v8H30z" fill="#6a6a6a"/><path d="M14 38l4 8M24 36l2 8M56 38l-2 8M66 40l-4 8M44 36l0 8" stroke="#444" stroke-width="1.400"/></g>
<rect x="94" y="37" width="23" height="29" fill="#566070"/><g filter="url(#tb1)"><path d="M100 40h12v12h-12z" fill="#cbb9a6"/><path d="M98 52h16v14H98z" fill="#6a6a72"/><path d="M96 56h8v8h-8z" fill="#b8a090"/></g></svg></div>
<div class="t" style="left:4px;top:135.1px;font-size:14.300px;color:#484848;letter-spacing:-0.200px">43</div><div style="left:35px;top:138.6px;width:123.600px;height:69.700px;overflow:hidden;box-shadow:0 0 0 0.600px #d0d0d0"><div style="left:0px;top:0px;width:124px;height:70px;background:#b4c7e7;"></div><div class="t" style="left:0px;top:1.5px;width:124px;text-align:center;font-family:'Liberation Serif',serif;font-weight:bold;font-size:5.4px;color:#1f2a44;line-height:1.05;white-space:normal">Переклади повного сонетарію<br>українською мовою</div><div class="t" style="left:0;top:17px;width:124px;text-align:center;font-family:'Liberation Serif',serif;font-size:3.300px;line-height:1.2;color:#3a4660;white-space:normal">І. Костецький, Л. Гандзюк, Д. Павличко, О. Тарнавський, І.<br>Селезінка, Г. Пилипенко, Н. Бутук, В. Захара, І. Рапчин, О. Зважник.</div><div style="left:2px;top:27px;width:46px;height:14px;background:linear-gradient(180deg,#2a0a0a,#b81f2c 45%,#6c1018 60%,#1a0808);"></div><div style="left:8px;top:42px;width:35px;height:26px;background:#3d3322;"></div><div style="left:11px;top:46px;width:29px;height:8px;background:#7a6a3a;filter:blur(1px)"></div><div style="left:14px;top:55px;width:24px;height:11px;background:#b8403a;filter:blur(1.5px)"></div><div style="left:50px;top:27px;width:26px;height:41px;background:#fdfdfd;"></div><svg style="left:55px;top:33px" width="16" height="30" viewBox="0 0 16 30"><path d="M8 1l6 11H2zM8 29l6-11H2z" fill="#111"/><rect x="2" y="12.500" width="12" height="5" fill="#333"/></svg><div style="left:76px;top:27px;width:17px;height:41px;background:#d89454;"></div><div style="left:93px;top:27px;width:30px;height:41px;background:#a8281c;"></div><div style="left:102px;top:40px;width:19px;height:13px;background:#f4e6d8;border-radius:50%"></div></div>
<div class="t" style="left:4px;top:225.7px;font-size:14.300px;color:#484848;letter-spacing:-0.200px">44</div><div style="left:35px;top:229.2px;width:123.600px;height:69.700px;overflow:hidden;box-shadow:0 0 0 0.600px #d0d0d0"><div style="left:0px;top:0px;width:124px;height:70px;background:#ffff00;"></div><div style="left:0px;top:0px;width:124px;height:15.5px;background:#335a96;"></div><div class="t" style="left:0px;top:1.6px;width:124px;text-align:center;font-family:'Liberation Serif',serif;font-weight:bold;font-size:5.3px;color:#fff;">Ivan Franko National Academic Drama Theatre</div><div class="t" style="left:16px;top:10px;width:32px;text-align:center;font-size:3.200px;font-weight:bold;color:#f3e84a">Richard III</div><div class="t" style="left:78px;top:10px;width:32px;text-align:center;font-size:3.200px;font-weight:bold;color:#f3e84a">Coriolanus</div><div style="left:7px;top:19px;width:49px;height:23px;background:#0f0c0c;"></div><div style="left:10px;top:24px;width:14px;height:16px;background:#5a5248;filter:blur(2px)"></div><div style="left:36px;top:22px;width:14px;height:18px;background:#6a5a4e;filter:blur(2px)"></div><div style="left:7px;top:44px;width:49px;height:23px;background:#120a0a;"></div><div style="left:20px;top:50px;width:22px;height:14px;background:#9a5a48;filter:blur(2.500px)"></div><div style="left:67px;top:19px;width:49px;height:23px;background:#d4d0d0;"></div><div class="t" style="left:67px;top:24px;width:49px;text-align:center;font-size:8px;color:#b02a3a;letter-spacing:0.500px;transform:rotate(-4deg)">КОРІОЛАН</div><div style="left:67px;top:37px;width:49px;height:5px;background:#3a3636;filter:blur(1px)"></div><div style="left:67px;top:44px;width:49px;height:23px;background:#140808;"></div><div style="left:83px;top:56px;width:10px;height:10px;background:#c0704a;filter:blur(2px)"></div><div style="left:70px;top:54px;width:8px;height:8px;background:#8a4a3a;filter:blur(2px)"></div><div style="left:104px;top:55px;width:8px;height:8px;background:#8a4a3a;filter:blur(2px)"></div></div>
<div class="t" style="left:4px;top:316.3px;font-size:14.300px;color:#484848;letter-spacing:-0.200px">45</div><div style="left:35px;top:319.8px;width:123.600px;height:69.700px;overflow:hidden;box-shadow:0 0 0 0.600px #d0d0d0"><div style="left:0px;top:0px;width:124px;height:70px;background:#ccd6e4;"></div><div style="left:2px;top:3px;width:46px;height:30px;background:#2e2e2e;"></div><div class="t" style="left:2px;top:8px;width:46px;text-align:center;font-size:10px;color:#bdbdbd;transform:scaleX(0.800);letter-spacing:0.500px">HAMLET</div><div style="left:6px;top:20px;width:38px;height:10px;background:#444;filter:blur(1px)"></div><div style="left:50px;top:4px;width:34px;height:30px;background:#6a5e4c;"></div><div style="left:56px;top:8px;width:24px;height:20px;background:#a89880;filter:blur(2.500px)"></div><div style="left:86px;top:2px;width:31px;height:20px;background:#3a2c28;"></div><div style="left:92px;top:4px;width:20px;height:16px;background:#d8c8b8;filter:blur(2.500px)"></div><div style="left:89px;top:23px;width:31px;height:19px;background:#2a201e;"></div><div style="left:96px;top:26px;width:18px;height:12px;background:#c8b090;filter:blur(2.500px)"></div><div style="left:2px;top:38px;width:29px;height:30px;background:#2a2024;"></div><div style="left:8px;top:42px;width:18px;height:22px;background:#a88070;filter:blur(2.500px)"></div><div style="left:8px;top:39px;width:18px;height:8px;background:#a07090;filter:blur(1.500px)"></div><div style="left:33px;top:39px;width:49px;height:28px;background:#4a3a2a;"></div><div style="left:38px;top:50px;width:40px;height:12px;background:#2a2420;filter:blur(2px)"></div><div style="left:36px;top:41px;width:44px;height:8px;background:#7a6248;filter:blur(2px)"></div><div style="left:84px;top:44px;width:37px;height:24px;background:#0e0a0a;"></div><div style="left:96px;top:48px;width:14px;height:16px;background:#8a5a40;filter:blur(2.500px)"></div></div>
<div class="t" style="left:4px;top:406.9px;font-size:14.300px;color:#c0452b;letter-spacing:-0.200px">46</div><div style="left:32px;top:407px;width:129.400px;height:75.800px;border:2.800px solid #7b0e18;background:#f6e4e4"></div><div style="left:35px;top:410.4px;width:123.600px;height:69.700px;overflow:hidden;box-shadow:0 0 0 0.600px #d0d0d0"><div style="left:0px;top:0px;width:124px;height:70px;background:#ffff00;"></div><div style="left:0px;top:0px;width:124px;height:13.3px;background:#0070c0;"></div><div class="t" style="left:0px;top:3.2px;width:124px;text-align:center;font-family:'Liberation Serif',serif;font-weight:bold;font-size:5.6px;color:#fff;">“To be or not to be” (16 March 2022)</div><svg style="left:18px;top:13.300px" width="88" height="49.400" viewBox="0 0 703 395" preserveAspectRatio="none"><rect width="703" height="395" fill="#09060b"/><g filter="url(#b3)"><path d="M287 0H473L426 61 352 52 290 60z" fill="#5e5946"/><path d="M525 0H644L629 117 590 198H550V135L518 74z" fill="#77777a"/><path d="M426 126L518 74 550 135V198H426z" fill="#2c2c2a"/><path d="M552 217H667V323H560z" fill="#6a675b"/><path d="M419 208H478V285H419z" fill="#33332f"/><path d="M363 301L451 348 458 395H363zM415 292L554 323H703V352L480 357z" fill="#4c4736"/><rect x="480" y="352" width="223" height="12" fill="#857d62"/><path d="M478 217h58v54h-58z" fill="#858169"/><path d="M480 168h59v52h-59z" fill="#9a9684"/><path d="M477 153L496 133 523 135 539 153 536 166 478 162z" fill="#2b4a9a"/><path d="M473 155L487 166 478 193 460 198z" fill="#cda72a"/><ellipse cx="509" cy="112" rx="16" ry="16" fill="#8a6444"/><rect x="352" y="82" width="12" height="313" fill="#362f22"/></g><path d="M30 28h26v26h-26zM66 30h80v24h-80zM160 30h40v24h-40zM66 66h140v10h-140z" fill="#d0d0d0" opacity="0.750"/><rect width="703" height="395" fill="#050308" opacity="0.280"/></svg></div>
<div class="t" style="left:4px;top:497.5px;font-size:14.300px;color:#484848;letter-spacing:-0.200px">47</div><div style="left:35px;top:501px;width:123.600px;height:69.700px;overflow:hidden;box-shadow:0 0 0 0.600px #d0d0d0"><div style="left:0px;top:0px;width:124px;height:70px;background:#ffff00;"></div><div style="left:0px;top:0px;width:124px;height:13px;background:#0070c0;"></div><div class="t" style="left:0px;top:3.2px;width:124px;text-align:center;font-family:'Liberation Serif',serif;font-weight:bold;font-size:5.6px;color:#fff;">Шекспір як арттерапія</div><div style="left:14px;top:16px;width:96px;height:52px;background:#6e6259"></div><div style="left:14px;top:16px;width:22px;height:28px;background:#7a6450;"></div><div style="left:20px;top:20px;width:12px;height:18px;background:#d8d0c0;filter:blur(2px)"></div><div style="left:36px;top:16px;width:20px;height:30px;background:#1e2a22;"></div><div style="left:40px;top:28px;width:12px;height:10px;background:#b8b040;filter:blur(2px)"></div><div style="left:56px;top:16px;width:28px;height:32px;background:#d0d0d0;"></div><div style="left:60px;top:19px;width:20px;height:24px;background:#3a3a3a;filter:blur(2.500px);border-radius:40%"></div><div style="left:65px;top:24px;width:10px;height:12px;background:#d8d0c8;filter:blur(1.500px)"></div><div style="left:84px;top:16px;width:26px;height:30px;background:#2a2a30;"></div><div style="left:92px;top:22px;width:14px;height:18px;background:#8a7a6a;filter:blur(2.500px)"></div><div style="left:14px;top:46px;width:40px;height:22px;background:#6a4a40;"></div><div style="left:14px;top:46px;width:40px;height:8px;background:#7a7a80;filter:blur(1.500px)"></div><div style="left:18px;top:56px;width:32px;height:8px;background:#2a2428;filter:blur(1.500px)"></div><div style="left:54px;top:48px;width:34px;height:20px;background:#e4dcd4;"></div><div style="left:58px;top:54px;width:26px;height:10px;background:#c07a5a;filter:blur(2px)"></div><div style="left:88px;top:46px;width:22px;height:22px;background:#8a8478;"></div><div style="left:91px;top:50px;width:16px;height:15px;background:#d8e0d0;filter:blur(1.500px)"></div></div>
<div class="t" style="left:4px;top:588.1px;font-size:14.300px;color:#484848;letter-spacing:-0.200px">48</div><svg style="left:9px;top:605.6px" width="12" height="10" viewBox="0 0 12 10"><path d="M7.500 0.300l1.300 3.200 3 0.200-2.300 2 0.800 3.300-2.800-1.800-2.800 1.800 0.800-3.300-2.300-2 3-0.200z" fill="#555"/><path d="M0 3h2.500M0.500 5h2M0 7h2.500" stroke="#777" stroke-width="0.700"/></svg><div style="left:35px;top:591.6px;width:123.600px;height:69.700px;overflow:hidden;box-shadow:0 0 0 0.600px #d0d0d0"><div style="left:0px;top:0px;width:124px;height:70px;background:#ffff00;"></div><div style="left:0px;top:0px;width:124px;height:11.5px;background:#0070c0;"></div><div class="t" style="left:0px;top:3px;width:124px;text-align:center;font-family:'Liberation Serif',serif;font-weight:bold;font-size:4.8px;color:#fff;">Засідання Британського Парламенту (26.04.2023)</div><div style="left:16px;top:15px;width:91px;height:52px;background:#3a3a32;"></div><div style="left:16px;top:15px;width:91px;height:14px;background:#4a3c44;filter:blur(1.500px)"></div><div style="left:16px;top:30px;width:91px;height:4px;background:#7a5a3a;"></div><div style="left:16px;top:30px;width:12px;height:30px;background:#d8d8d8;filter:blur(2px)"></div><div style="left:18px;top:24px;width:8px;height:8px;background:#e8c8a8;filter:blur(1.500px)"></div><div style="left:36px;top:30px;width:18px;height:32px;background:#16161c;filter:blur(1.500px)"></div><div style="left:41px;top:22px;width:8px;height:9px;background:#8a5a40;filter:blur(1.500px)"></div><div style="left:58px;top:36px;width:14px;height:26px;background:#1e1e24;filter:blur(1.500px)"></div><div style="left:61px;top:30px;width:7px;height:8px;background:#6a4a38;filter:blur(1.500px)"></div><div style="left:73px;top:38px;width:15px;height:24px;background:#d8285a;filter:blur(1.500px)"></div><div style="left:77px;top:30px;width:7px;height:8px;background:#8a5a48;filter:blur(1.500px)"></div><div style="left:90px;top:36px;width:15px;height:26px;background:#20222c;filter:blur(1.500px)"></div><div style="left:94px;top:29px;width:7px;height:8px;background:#d8a888;filter:blur(1.500px)"></div><div style="left:34px;top:54px;width:30px;height:10px;background:#e8e0d0;filter:blur(1px)"></div><div style="left:66px;top:58px;width:18px;height:8px;background:#2a5a3a;filter:blur(1px)"></div><div style="left:16px;top:62px;width:91px;height:5px;background:#5a3a20;filter:blur(1px)"></div></div></div></div>
</div>
<!--TILES-->
<svg width="0" height="0" style="left:0;top:0"><defs>
<filter id="tb05" color-interpolation-filters="sRGB" x="-20%" y="-20%" width="140%" height="140%"><feGaussianBlur stdDeviation="0.600"/></filter>
<filter id="tb1" color-interpolation-filters="sRGB" x="-20%" y="-20%" width="140%" height="140%"><feGaussianBlur stdDeviation="1.100"/></filter>
<filter id="tb2" color-interpolation-filters="sRGB" x="-20%" y="-20%" width="140%" height="140%"><feGaussianBlur stdDeviation="2"/></filter>
<filter id="tb4" color-interpolation-filters="sRGB" x="-30%" y="-30%" width="160%" height="160%"><feGaussianBlur stdDeviation="4"/></filter>
</defs></svg>
<div style="left:1351px;top:124.500px;width:176px;height:99.500px;overflow:hidden;background:#222"><svg style="left:0;top:0" width="176" height="99.5" viewBox="0 0 176 99.5"><defs><linearGradient id="t1w" x1="0" y1="0" x2="1" y2="0"><stop offset="0" stop-color="#eef0ef"/><stop offset="1" stop-color="#d9dddb"/></linearGradient><linearGradient id="t1p" x1="0" y1="0" x2="1" y2="0"><stop offset="0" stop-color="#2e2c2c"/><stop offset="0.500" stop-color="#535353"/><stop offset="1" stop-color="#6a6a6a"/></linearGradient></defs>
<rect width="176" height="99.500" fill="#101010"/><rect x="29" width="37" height="99.500" fill="url(#t1w)"/>
<rect x="65.700" width="63" height="99.500" fill="#26201f"/>
<g filter="url(#tb05)"><rect x="72.500" y="1" width="15" height="15" fill="#8c3638"/><rect x="76" y="3" width="8" height="13" fill="#6a2a30"/><rect x="88" y="2" width="5" height="14" fill="#d8d0c0"/><rect x="93" y="1" width="4" height="15" fill="#c9c2b4"/><rect x="97" y="2" width="4" height="14" fill="#2f5f62"/><rect x="101" y="1" width="7" height="15" fill="#cfc6b6"/><rect x="108" y="2" width="4" height="14" fill="#9a4a5a"/><rect x="112" y="1" width="5" height="15" fill="#d6cebd"/><rect x="117" y="2" width="5" height="14" fill="#b35c3a"/><rect x="122" y="1" width="5" height="15" fill="#d8d0c0"/>
<path d="M98 15l3-6q4-4 8 0l3 6z" fill="#161212"/><circle cx="105" cy="11" r="2.300" fill="#c8b890"/>
<rect x="72.500" y="22" width="4" height="18" fill="#d8d0c0"/><rect x="76.500" y="24" width="6" height="16" fill="#7a6a5a"/><rect x="82.500" y="22" width="5" height="18" fill="#c9bfae"/><rect x="88" y="21" width="20" height="19" fill="#7a2634"/><rect x="92" y="22" width="1" height="17" fill="#a24a54"/><rect x="98" y="22" width="1" height="17" fill="#a24a54"/><rect x="108" y="25" width="4" height="15" fill="#d0c8b8"/><rect x="112" y="23" width="5" height="17" fill="#3f5f84"/><rect x="117" y="22" width="5" height="18" fill="#d4ccbc"/><rect x="122" y="23" width="5" height="17" fill="#c4ae94"/>
<rect x="116" y="43" width="11" height="6" fill="#c0b6a4"/></g>
<rect x="128.300" width="15.500" height="99.500" fill="url(#t1p)"/><rect x="143.700" width="33" height="99.500" fill="#f3f6f5"/>
<path d="M54 81L57 57Q58 51 64 51H132Q137 51 138 58L140 81z" fill="#efe7db" filter="url(#tb05)"/>
<g filter="url(#tb1)"><path d="M3 80Q2 64 16 57 28 58 30 72L26 80z" fill="#2a4a30"/><path d="M30 62Q36 50 44 56 47 64 40 70 34 72 30 62z" fill="#3a6a42"/><path d="M36 80Q38 68 41 60" stroke="#2f5a36" stroke-width="1.200" fill="none"/><path d="M44 80Q46 70 52 62" stroke="#2f5a36" stroke-width="1" fill="none"/></g>
<g filter="url(#tb1)"><path d="M67 82Q64 52 78 38 94 26 110 38 124 52 121 82z" fill="#7a4a35"/><path d="M80 82Q78 60 82 50 94 42 107 50 112 62 110 82z" fill="#b9826b"/><path d="M80 50Q94 38 108 50 100 46 94 47 86 46 80 50z" fill="#6a3f2c"/></g>
<g fill="none" stroke="#2a1c1c" stroke-width="1.300"><rect x="80.500" y="55" width="13" height="9" rx="3"/><rect x="96.500" y="55" width="13" height="9" rx="3"/><path d="M93.500 57.500h3M80.500 57l-2-1M109.500 57l2-1"/></g>
<path d="M86 74q8 2 16 0" stroke="#8a5048" stroke-width="1" fill="none" filter="url(#tb05)"/></svg><div style="left:0;top:80.5px;width:176px;height:19px;background:rgba(40,40,40,0.900)"><svg style="left:4px;top:3px" width="13" height="14" viewBox="0 0 13 14"><rect x="4.200" y="0.500" width="4.600" height="8" rx="2.300" fill="#e8484e"/><path d="M2.200 6.500a4.300 4.300 0 0 0 8.600 0M6.500 11v2M4 13.200h5" stroke="#e8484e" stroke-width="1.100" fill="none"/><path d="M11.800 0.800L1 13" stroke="#ff5a5a" stroke-width="1.200"/></svg><div class="t" id="n1" style="left:22.5px;top:3px;font-size:13px;color:#fff;letter-spacing:-0.3px">Оксана Василівна Галь...</div></div></div>
<div style="left:1351px;top:230px;width:176px;height:99px;overflow:hidden;background:#222"><svg style="left:0;top:0" width="176" height="99" viewBox="0 0 176 99"><defs><linearGradient id="t2w" x1="0" y1="0" x2="1" y2="0"><stop offset="0" stop-color="#d9cca6"/><stop offset="0.350" stop-color="#e2d1a8"/><stop offset="0.600" stop-color="#d6c49a"/><stop offset="0.800" stop-color="#c4c49c"/><stop offset="1" stop-color="#b6c69a"/></linearGradient><pattern id="t2s" width="2.400" height="4" patternUnits="userSpaceOnUse"><rect width="1" height="4" fill="#cdbb8e" opacity="0.450"/></pattern></defs>
<rect width="176" height="99" fill="url(#t2w)"/><rect x="18" width="100" height="99" fill="url(#t2s)"/>
<path d="M110 0h14l-1 14-12-2z" fill="#e2e6e2" filter="url(#tb05)"/><path d="M113 2l8 10h-8z" fill="#9ac0d0" filter="url(#tb05)"/>
<g filter="url(#tb2)"><path d="M0 0h18l4 8-8 14-14 6z" fill="#e6e8e4"/></g>
<g filter="url(#tb1)"><path d="M0 30L15 38 29 51 47 52 52 68 40 74 29 80H0z" fill="#3b6339"/><path d="M4 44L20 58 14 80H2z" fill="#22402a"/><path d="M28 54l18 4 4 10-16 8z" fill="#2a4a2e"/><path d="M2 78Q8 56 16 40" stroke="#86a862" stroke-width="2" fill="none"/><path d="M10 80Q22 62 38 58" stroke="#5a8a4a" stroke-width="1.500" fill="none"/>
<ellipse cx="19.700" cy="23.700" rx="9" ry="13.500" fill="#a8323a"/><ellipse cx="17" cy="20" rx="3.500" ry="8" fill="#c24a52"/><ellipse cx="33" cy="40" rx="5.500" ry="6.500" fill="#7a2028"/><ellipse cx="30.500" cy="29" rx="5.500" ry="8" fill="#ece8e4"/><ellipse cx="43.700" cy="42" rx="9" ry="8" fill="#efece8"/><path d="M60 80Q58 68 70 64 82 68 84 80z" fill="#f3f1ee"/><ellipse cx="58" cy="77" rx="6" ry="4" fill="#e8e6e2"/></g>
<g filter="url(#tb2)"><path d="M79 62h32v38H79z" fill="#3a241e"/></g>
<g filter="url(#tb2)"><path d="M94 48Q92 22 112 12 134 4 152 16 168 30 166 56 164 72 152 80L104 78Q94 66 94 48z" fill="#2b232a"/><path d="M105 58Q103 40 110 34 127 28 146 36 151 46 148 66 142 86 128 90 112 88 105 58z" fill="#8c6a72"/><path d="M112 44Q127 38 144 44 146 60 138 74 126 78 116 72 110 58 112 44z" fill="#9e7e86"/><path d="M104 40Q112 20 132 20 150 22 152 42 140 30 126 32 112 32 104 40z" fill="#2b232a"/><path d="M142 78h34v22h-40z" fill="#5a5c68"/><path d="M156 70h12l6 20h-16z" fill="#c4ac7e"/><path d="M118 88h22l4 12h-30z" fill="#9a7a80"/></g>
<g fill="none" stroke="#54424c" stroke-width="1.100" filter="url(#tb05)"><rect x="106" y="41" width="17" height="11" rx="4"/><rect x="128" y="41" width="18" height="11" rx="4"/><path d="M123 44h5M146 44l6-1"/></g>
<path d="M118 70q7 2 13 0" stroke="#6a4a52" stroke-width="1.200" fill="none" filter="url(#tb05)"/></svg><div style="left:0;top:80px;width:123px;height:19px;background:rgba(40,40,40,0.900)"><svg style="left:4px;top:3px" width="13" height="14" viewBox="0 0 13 14"><rect x="4.200" y="0.500" width="4.600" height="8" rx="2.300" fill="#e8484e"/><path d="M2.200 6.500a4.300 4.300 0 0 0 8.600 0M6.500 11v2M4 13.200h5" stroke="#e8484e" stroke-width="1.100" fill="none"/><path d="M11.800 0.800L1 13" stroke="#ff5a5a" stroke-width="1.200"/></svg><div class="t" id="n2" style="left:22.5px;top:3px;font-size:13px;color:#fff;letter-spacing:-0.26px">Yuliia Vyshnytska</div></div></div>
<div style="left:1351px;top:335px;width:176px;height:99px;overflow:hidden;background:#222"><svg style="left:0;top:0" width="176" height="99" viewBox="0 0 176 99"><defs><linearGradient id="t3w" x1="0" y1="0" x2="1" y2="0.200"><stop offset="0" stop-color="#aaa298"/><stop offset="0.400" stop-color="#c2bab2"/><stop offset="0.800" stop-color="#d0cac5"/><stop offset="1" stop-color="#c8c2bc"/></linearGradient></defs>
<rect width="176" height="99" fill="url(#t3w)"/>
<g filter="url(#tb05)"><rect x="0" y="0" width="43" height="99" fill="#8f6040"/><rect x="0" y="0" width="39.500" height="29" fill="#c8c2b8"/><rect x="0" y="0" width="3" height="28" fill="#7a2028"/><rect x="3" y="0" width="11.500" height="28" fill="#a22a34"/><rect x="14.500" y="1" width="3.500" height="27" fill="#e8e4dc"/><rect x="18" y="1" width="4" height="28" fill="#4a3024"/><rect x="22" y="2" width="4" height="28" fill="#d8d4ca"/><rect x="26" y="3" width="5" height="28" fill="#ece8e0"/><rect x="31" y="4" width="3" height="28" fill="#5a3a2a"/><rect x="34" y="6" width="4.500" height="27" fill="#e4e0d8"/>
<path d="M0 28L40 33V38.500L0 34z" fill="#a5703f"/>
<rect x="0" y="36" width="39.500" height="44" fill="#e6e4e0"/><path d="M0 39h36l-1 4.500H0z" fill="#b04a54"/><rect x="0" y="46" width="9" height="34" fill="#34343a"/><rect x="9" y="47" width="4" height="33" fill="#eceae6"/><rect x="13" y="46" width="6" height="34" fill="#dcdad4"/><rect x="13.500" y="48" width="5" height="16" fill="#2a4a88"/><rect x="19" y="46" width="4.500" height="34" fill="#e2e0da"/><rect x="23.700" y="46" width="9.500" height="34" fill="#7c2a2e"/><rect x="33.500" y="47" width="5" height="33" fill="#e8e6e2"/>
<rect x="0" y="80" width="43" height="19" fill="#5a4034"/><rect x="39" y="0" width="4" height="80" fill="#9a6a48"/></g>
<g filter="url(#tb1)"><path d="M53 99L66 80Q76 74 90 75L122 77.500Q134 80 141 86L144 99z" fill="#b02430"/><path d="M82 60Q78 36 92 29 104 24 116 30 128 40 124 62 120 74 116 76L88 76Q84 70 82 60z" fill="#a8784e"/><path d="M87 64Q84 46 90 41 103 36 114 42 119 52 116 66 112 78 104 80 92 78 87 64z" fill="#d8ac96"/><path d="M86 46Q92 32 106 32 120 36 120 50 112 40 104 40 94 40 86 46z" fill="#a8784e"/><path d="M98 78Q100 72 108 73 118 74 118 84L116 99H100z" fill="#d9b09a"/></g>
<g fill="none" stroke="#a39690" stroke-width="0.900"><rect x="87.500" y="45" width="13" height="9" rx="3"/><rect x="104" y="45" width="13" height="9" rx="3"/><path d="M100.500 48h3.500"/></g>
<path d="M96 66q6 1.500 11 0" stroke="#a8706a" stroke-width="1" fill="none" filter="url(#tb05)"/></svg><div style="left:0;top:80px;width:67px;height:19px;background:rgba(40,40,40,0.900)"><svg style="left:4px;top:3px" width="13" height="14" viewBox="0 0 13 14"><rect x="4.200" y="0.500" width="4.600" height="8" rx="2.300" fill="#e8484e"/><path d="M2.200 6.500a4.300 4.300 0 0 0 8.600 0M6.500 11v2M4 13.200h5" stroke="#e8484e" stroke-width="1.100" fill="none"/><path d="M11.800 0.800L1 13" stroke="#ff5a5a" stroke-width="1.200"/></svg><div class="t" id="n3" style="left:22.5px;top:3px;font-size:13px;color:#fff;letter-spacing:-0.42px">Галина</div></div></div>
<div style="left:1351px;top:440px;width:176px;height:99px;overflow:hidden;background:#212121"><div class="t" id="c4" style="left:0;top:41px;width:176px;text-align:center;font-size:15px;font-weight:bold;color:#fff;letter-spacing:-0.02px">Анна Дихнич</div><div style="left:0;top:80px;width:102px;height:19px;background:#2d2d2d"><svg style="left:4px;top:3px" width="13" height="14" viewBox="0 0 13 14"><rect x="4.200" y="0.500" width="4.600" height="8" rx="2.300" fill="#e8484e"/><path d="M2.200 6.500a4.300 4.300 0 0 0 8.600 0M6.500 11v2M4 13.200h5" stroke="#e8484e" stroke-width="1.100" fill="none"/><path d="M11.800 0.800L1 13" stroke="#ff5a5a" stroke-width="1.200"/></svg><div class="t" id="n4" style="left:22.500px;top:3px;font-size:13px;color:#fff;letter-spacing:-0.15px">Анна Дихнич</div></div></div>
<div style="left:1351px;top:545px;width:176px;height:99px;overflow:hidden;background:#212121"><div class="t" id="c5" style="left:0;top:41px;width:176px;text-align:center;font-size:15px;font-weight:bold;color:#fff;letter-spacing:-0.42px">iPhone</div><div style="left:0;top:80px;width:65px;height:19px;background:#2d2d2d"><svg style="left:4px;top:3px" width="13" height="14" viewBox="0 0 13 14"><rect x="4.200" y="0.500" width="4.600" height="8" rx="2.300" fill="#e8484e"/><path d="M2.200 6.500a4.300 4.300 0 0 0 8.600 0M6.500 11v2M4 13.200h5" stroke="#e8484e" stroke-width="1.100" fill="none"/><path d="M11.800 0.800L1 13" stroke="#ff5a5a" stroke-width="1.200"/></svg><div class="t" id="n5" style="left:22.500px;top:3px;font-size:13px;color:#fff;letter-spacing:-0.41px">iPhone</div></div></div>
<div style="left:1347px;top:645.700px;width:184.600px;height:107.500px;background:linear-gradient(180deg,#dfe97a 0,#dbe870 5%,#a9e03c 30%,#84da20 49.500%,#5cc412 50.500%,#7ed028 62%,#d6e868 88%,#f0f082 100%)"><div style="left:4px;top:0;width:177px;height:4px;background:#dfe66c"></div><div style="left:4px;top:103px;width:177px;height:4px;background:#eef07e"></div></div>
<div style="left:1351px;top:650px;width:176px;height:99px;overflow:hidden;background:#222"><svg style="left:0;top:0" width="176" height="99" viewBox="0 0 176 99"><defs><linearGradient id="t6c" x1="0" y1="0" x2="1" y2="1"><stop offset="0" stop-color="#2e2c29"/><stop offset="0.300" stop-color="#4c4842"/><stop offset="0.700" stop-color="#6e675b"/><stop offset="1" stop-color="#857b6a"/></linearGradient></defs>
<rect width="176" height="99" fill="#c8c09a"/><rect x="148" y="30" width="28" height="69" fill="#c4c4a6" filter="url(#tb2)"/>
<path d="M0 0H176V28L37 33 12 0z" fill="url(#t6c)" filter="url(#tb05)"/>
<g filter="url(#tb05)"><path d="M0 0H12L36 32.700V50.400L41.400 57.500V99H0z" fill="#5f3519"/><path d="M0 0H12L36 32.700V52L24 46 10 30 0 30z" fill="#1d1612"/><path d="M2 22l6 4 2 12-8-4z" fill="#7a8684"/><path d="M12 30l8 8-1 14-8-8z" fill="#9aa09a"/><path d="M8 44L20 56V99H8z" fill="#7a4a22"/><path d="M20 56l14 8V99H20z" fill="#2a1e16"/><rect x="17" y="46" width="4" height="16" fill="#d8dad2"/><rect x="22" y="62" width="3" height="14" fill="#c8c8c0"/><rect x="27" y="66" width="6" height="12" fill="#8a6a4a"/><path d="M16 80h20v19H16z" fill="#b0a48e"/><rect x="20" y="80" width="2" height="19" fill="#e4e4dc"/><rect x="26" y="80" width="2" height="19" fill="#d8d4c8"/><rect x="31" y="80" width="2" height="19" fill="#ece8e0"/></g>
<rect x="48.500" y="53" width="40" height="46" fill="#d6dada" filter="url(#tb05)"/><rect x="85.300" y="55" width="1.300" height="44" fill="#77797a"/>
<g filter="url(#tb05)"><rect x="93" y="0" width="2.500" height="3" fill="#e8e8e4"/><rect x="108" y="1" width="3" height="4" fill="#d8d8d2"/><rect x="117" y="2" width="3.500" height="8" fill="#e0e0da"/><rect x="100" y="0" width="22" height="1.500" fill="#3a362f"/></g>
<g filter="url(#tb1)"><path d="M93 66Q88 40 100 28 118 16 136 26 152 40 148 64 146 76 142 82L98 80Q94 74 93 66z" fill="#4b2c31"/><path d="M100 40Q112 24 130 28 120 30 112 36 104 42 100 40z" fill="#7c4c4a"/><path d="M98.500 70Q96 52 102 46 118 40 138 46 143 56 140 74 136 92 120 97 104 92 98.500 70z" fill="#d8a9a5"/><path d="M97 50Q104 34 122 34 142 38 144 54 132 42 120 43 106 42 97 50z" fill="#4b2c31"/><path d="M92 99Q96 90 108 89L120 98 134 89Q158 90 168 99z" fill="#1e2342"/><path d="M108 89l12 9 14-9q-12 4-26 0z" fill="#d4a49e"/></g>
<g filter="url(#tb05)"><rect x="98.500" y="51.500" width="20" height="16.500" rx="6" fill="#e2e4f2" stroke="#7c5ca4" stroke-width="1.100" opacity="0.920"/><rect x="121.500" y="51.500" width="20" height="16.500" rx="6" fill="#e2e4f2" stroke="#7c5ca4" stroke-width="1.100" opacity="0.920"/><ellipse cx="108.500" cy="59" rx="4.500" ry="2.500" fill="#7a7a8a" opacity="0.700"/><ellipse cx="131.500" cy="59" rx="4.500" ry="2.500" fill="#7a7a8a" opacity="0.700"/><ellipse cx="119" cy="82" rx="7" ry="3.800" fill="#a82434"/><path d="M114 81.500q5 1.500 10 0" stroke="#5a1420" stroke-width="0.900" fill="none"/></g></svg><div style="left:0;top:80px;width:95px;height:19px;background:rgba(40,40,40,0.900)"><div class="t" id="n6" style="left:4.5px;top:3px;font-size:13px;color:#fff;letter-spacing:0.08px">Nataliya Torkut</div></div></div>
<div style="left:1402px;top:755px;width:74px;height:34px;background:#111;border-radius:5px"><svg style="left:30px;top:12px" width="15" height="10" viewBox="0 0 15 10"><path d="M1 1.500l6.500 6.500L14 1.500" stroke="#9a98ae" stroke-width="1.800" fill="none"/></svg></div>
<div style="left:1270px;top:425px;width:1px;height:24px;background:#8a8a8a;"></div><div style="left:1273px;top:425px;width:1px;height:24px;background:#8a8a8a;"></div>
<!--TOOLBAR-->
<div id="toolbar">
<svg style="left:38px;top:13px" width="26" height="26" viewBox="0 0 26 26"><rect x="9.500" y="3" width="7" height="12.500" rx="3.500" fill="#adadad"/><path d="M6.500 12a6.500 6.500 0 0 0 13 0M13 18.500v4M9.500 22.800h7" stroke="#adadad" stroke-width="1.500" fill="none"/><path d="M24.500 1.500L1.500 24" stroke="#e8484e" stroke-width="1.600"/></svg>
<div class="t" id="l1" style="left:-48.25px;top:42.5px;width:200px;text-align:center;font-size:13px;color:#c9c9c9;letter-spacing:-0.32px"><span id="l1s">Включить звук</span></div>
<svg style="left:84.5px;top:22.500px" width="9" height="6" viewBox="0 0 9 6"><path d="M1 5l3.500-3.500L8 5" stroke="#c4c4c4" stroke-width="1.300" fill="none"/></svg>
<svg style="left:147px;top:18px" width="26" height="16" viewBox="0 0 26 16"><rect x="0.500" y="0.800" width="17.500" height="14.400" rx="3.500" fill="#adadad"/><path d="M19.500 5.500L24.500 2.200q1-0.500 1 0.600v10.400q0 1.100-1 0.600L19.500 10.500z" fill="#adadad"/></svg>
<div class="t" id="l2" style="left:60px;top:42.5px;width:200px;text-align:center;font-size:13px;color:#c9c9c9;letter-spacing:-0.55px"><span id="l2s">Остановить видео</span></div>
<svg style="left:202.5px;top:22.500px" width="9" height="6" viewBox="0 0 9 6"><path d="M1 5l3.500-3.500L8 5" stroke="#c4c4c4" stroke-width="1.300" fill="none"/></svg>
<svg style="left:381px;top:15px" width="20" height="22" viewBox="0 0 20 22"><path d="M10 1L18.500 4v6.500c0 5-3.500 8.300-8.500 10.500C5 18.800 1.500 15.500 1.500 10.500V4z" fill="none" stroke="#adadad" stroke-width="1.800"/><path d="M10 2v9H2.200V4.500zM10 11h7.800q-0.500 5.500-7.800 9z" fill="#adadad"/></svg>
<div class="t" id="l3" style="left:291px;top:42.5px;width:200px;text-align:center;font-size:13px;color:#c9c9c9;letter-spacing:-0.58px"><span id="l3s">Безопасность</span></div>
<svg style="left:489px;top:16px" width="26" height="20" viewBox="0 0 26 20" fill="#adadad"><circle cx="8.500" cy="5.500" r="4.500"/><path d="M0.500 18.500q0-7 8-7t8 7q0 1-1 1h-14q-1 0-1-1z"/><circle cx="18.500" cy="6.500" r="3.600"/><path d="M17.800 12.200q7.500-0.500 7.700 6 0 1-1 1H18q0.600-0.600 0.500-1.500 0-3.500-2.500-5.200z"/></svg>
<div class="t" id="p86" style="left:518px;top:16px;font-size:13.500px;color:#c9c9c9;letter-spacing:-0.51px">86</div>
<div class="t" id="l4" style="left:401.9px;top:42.5px;width:200px;text-align:center;font-size:13px;color:#c9c9c9;letter-spacing:-0.44px"><span id="l4s">Участники</span></div>
<svg style="left:550.5px;top:22.500px" width="9" height="6" viewBox="0 0 9 6"><path d="M1 5l3.500-3.500L8 5" stroke="#c4c4c4" stroke-width="1.300" fill="none"/></svg>
<svg style="left:601px;top:16px" width="22" height="20" viewBox="0 0 22 20"><path d="M4 0.500h14q3.500 0 3.500 3.500v6.500q0 3.500-3.500 3.500H10.500L5 19v-5H4Q0.500 14 0.500 10.500V4Q0.500 0.500 4 0.500z" fill="#adadad"/></svg>
<div class="t" id="l5" style="left:511.5px;top:42.5px;width:200px;text-align:center;font-size:13px;color:#c9c9c9;letter-spacing:-0.85px"><span id="l5s">Чат</span></div>
<svg style="left:640.5px;top:22.500px" width="9" height="6" viewBox="0 0 9 6"><path d="M1 5l3.500-3.500L8 5" stroke="#c4c4c4" stroke-width="1.300" fill="none"/></svg>
<div style="left:713.500px;top:17px;width:25px;height:18px;border-radius:3.500px;background:#23d959"><svg style="left:6.500px;top:3.500px" width="12" height="11" viewBox="0 0 12 11"><path d="M6 10.500V2M2 5.500L6 1.500 10 5.500" stroke="#0a2a12" stroke-width="2" fill="none"/></svg></div>
<div class="t" id="l6" style="left:626.5px;top:42.5px;width:200px;text-align:center;font-size:13px;color:#23d959;letter-spacing:-0.52px"><span id="l6s">Демонстрация экрана</span></div>
<svg style="left:779px;top:22.500px" width="9" height="6" viewBox="0 0 9 6"><path d="M1 5l3.500-3.500L8 5" stroke="#c4c4c4" stroke-width="1.300" fill="none"/></svg>
<div style="left:853px;top:14px;width:20px;height:20px;border-radius:2.500px;background:#b4b4b4"><div style="left:6.500px;top:5.500px;width:2px;height:9px;background:#1f1f1f"></div><div style="left:11.500px;top:5.500px;width:2px;height:9px;background:#1f1f1f"></div></div>
<div style="left:878px;top:14px;width:20px;height:20px;border-radius:2.500px;background:#b4b4b4"><div style="left:5.500px;top:5.500px;width:9px;height:9px;border-radius:1px;background:#1f1f1f"></div></div>
<div class="t" id="l7" style="left:775.25px;top:44.5px;width:200px;text-align:center;font-size:13px;color:#c9c9c9;letter-spacing:-0.48px"><span id="l7s">Пауза/остановить запись</span></div>
<svg style="left:983px;top:14px" width="24" height="22" viewBox="0 0 24 22"><circle cx="10" cy="12.500" r="8.800" fill="#adadad"/><circle cx="7" cy="10.500" r="1.300" fill="#1a1a1a"/><circle cx="13" cy="10.500" r="1.300" fill="#1a1a1a"/><path d="M5.500 14.500q4.500 4.500 9 0z" fill="#1a1a1a"/><path d="M19 0.500v7M15.500 4h7" stroke="#adadad" stroke-width="1.500"/><circle cx="19" cy="4" r="4.800" fill="none" stroke="#1a1a1a" stroke-width="1.200" opacity="0"/></svg>
<div class="t" id="l8" style="left:893.9px;top:42.5px;width:200px;text-align:center;font-size:13px;color:#c9c9c9;letter-spacing:-0.63px"><span id="l8s">Реакции</span></div>
<svg style="left:1017px;top:22.500px" width="9" height="6" viewBox="0 0 9 6"><path d="M1 5l3.500-3.500L8 5" stroke="#c4c4c4" stroke-width="1.300" fill="none"/></svg>
<svg style="left:1069.500px;top:17px" width="17" height="17" viewBox="0 0 20 20" fill="none" stroke="#adadad" stroke-width="2"><path d="M1.500 8V6q0-4.500 4.500-4.500h3M18.500 11V14q0 4.500-4.500 4.500h-3"/><circle cx="15.500" cy="4.200" r="2.800"/><circle cx="4.500" cy="15.500" r="2.800"/></svg>
<div class="t" id="l9" style="left:978.75px;top:42.5px;width:200px;text-align:center;font-size:13px;color:#c9c9c9;letter-spacing:-0.4px"><span id="l9s">Приложения</span></div>
<svg style="left:1106.5px;top:22.500px" width="9" height="6" viewBox="0 0 9 6"><path d="M1 5l3.500-3.500L8 5" stroke="#c4c4c4" stroke-width="1.300" fill="none"/></svg>
<svg style="left:1171px;top:16px" width="22" height="19" viewBox="0 0 22 19" fill="none" stroke="#adadad" stroke-width="1.700"><path d="M9 14.500H4Q1 14.500 1 11.500V4Q1 1 4 1h13q3 0 3 3v7"/><rect x="10.500" y="13.500" width="10" height="3.800" rx="1.900" fill="#adadad"/></svg>
<div class="t" id="l10" style="left:1082.25px;top:42.5px;width:200px;text-align:center;font-size:13px;color:#c9c9c9;letter-spacing:-0.32px"><span id="l10s">Доски сообщений</span></div>
<svg style="left:1224.5px;top:22.500px" width="9" height="6" viewBox="0 0 9 6"><path d="M1 5l3.500-3.500L8 5" stroke="#c4c4c4" stroke-width="1.300" fill="none"/></svg>
<svg style="left:1281px;top:14px" width="20" height="22" viewBox="0 0 20 22" fill="none" stroke="#adadad" stroke-width="1.600"><path d="M15 13V4q0-3-3-3H6Q3 1 3 4v13q0 3 3 3h3"/><path d="M6.500 6.500h5M6.500 10h5M6.500 13.500h3" stroke-width="1.300"/><path d="M1 5h2.500M1 9h2.500M1 13h2.500M1 17h2.500" stroke-width="1.200"/><rect x="9.500" y="17" width="9.500" height="3.600" rx="1.800" fill="#adadad"/></svg>
<div class="t" id="l11" style="left:1189.65px;top:42.5px;width:200px;text-align:center;font-size:13px;color:#c9c9c9;letter-spacing:-0.48px"><span id="l11s">Примечания</span></div>
<svg style="left:1322.5px;top:22.500px" width="9" height="6" viewBox="0 0 9 6"><path d="M1 5l3.500-3.500L8 5" stroke="#c4c4c4" stroke-width="1.300" fill="none"/></svg>
<div style="left:1492.500px;top:22.500px;width:96px;height:26.500px;border-radius:6px;background:#b3232b"><div class="t" id="end" style="left:0;top:6.500px;width:96px;text-align:center;font-size:12.600px;font-weight:bold;color:#fff;letter-spacing:-0.45px"><span id="ends">Завершение</span></div></div>
</div>
<!--TASKBAR-->
<div id="taskbar">
<div style="left:0;top:0;width:1600px;height:1px;background:#cfc6c2"></div>
<svg style="left:18px;top:12px" width="26" height="20" viewBox="0 0 26 20"><defs><linearGradient id="cl" x1="0" y1="0" x2="0" y2="1"><stop offset="0" stop-color="#9dbcf4"/><stop offset="0.600" stop-color="#b4ccf6"/><stop offset="1" stop-color="#d4e2fa"/></linearGradient></defs><path d="M5.500 18.500a4.800 4.800 0 0 1-0.600-9.500 6 6 0 0 1 9.300-4 5.200 5.200 0 0 1 6.800 4.800 4.400 4.400 0 0 1-0.500 8.700z" fill="url(#cl)" stroke="#8fb0ee" stroke-width="0.600"/></svg>
<div class="t" id="w1" style="left:50.500px;top:11px;font-size:11.200px;color:#1c1c1c;letter-spacing:-0.54px">11°C</div>
<div class="t" id="w2" style="left:50.500px;top:26px;font-size:12px;color:#666;letter-spacing:0.02px">Cloudy</div>
<svg style="left:435px;top:13px" width="23" height="23" viewBox="0 0 23 23"><defs><linearGradient id="wg" x1="0" y1="0" x2="1" y2="1"><stop offset="0" stop-color="#4cc2ff"/><stop offset="1" stop-color="#0a72d6"/></linearGradient></defs><path d="M0 0h11v11H0zM12 0h11v11H12zM0 12h11v11H0zM12 12h11v11H12z" fill="url(#wg)"/></svg>
<div style="left:471.500px;top:8.500px;width:219px;height:31px;border-radius:15.500px;background:#f9f3ef;border:1px solid #e2d8d4;box-shadow:0 1px 1px rgba(0,0,0,.08)"><svg style="left:11px;top:7.500px" width="16" height="16" viewBox="0 0 16 16" fill="none" stroke="#222" stroke-width="1.600"><circle cx="6.500" cy="6.500" r="5"/><path d="M10.300 10.300L14.800 14.800" stroke-linecap="round"/></svg><div class="t" id="srch" style="left:36px;top:7.300px;font-size:14px;color:#666;letter-spacing:0.1px">Поиск</div></div>
<div style="left:703px;top:19.500px;width:17.500px;height:15px;background:#262626;border-radius:1.500px"></div><div style="left:708.500px;top:12.500px;width:18px;height:16px;background:linear-gradient(135deg,#fdfdfd,#d6d6d6);border-radius:1.500px;box-shadow:0 0 0 0.500px #bbb"></div>
<svg style="left:746px;top:11.500px" width="25" height="25" viewBox="0 0 25 25"><defs><linearGradient id="eg1" x1="0" y1="0" x2="1" y2="0"><stop offset="0" stop-color="#1a9be8"/><stop offset="0.600" stop-color="#2cc2a0"/><stop offset="1" stop-color="#6adb4a"/></linearGradient></defs><circle cx="12.500" cy="12.500" r="12" fill="#0f6cbd"/><path d="M1 10Q3 0.500 12.500 0.500T24.300 10.500Q24.500 15 19 15H14q1.500-1.500 1-3.500Q14 9 11 9 6 9 5 15 1.500 13 1 10z" fill="url(#eg1)"/><path d="M5 15q0-6 6-6 3 0 4 2.500-4-0.500-5.500 2.500-1.500 4 2.500 8 3 1.500 8-1-3.500 4.500-8.500 4Q5 22.500 5 15z" fill="#0c59a4"/></svg>
<svg style="left:790.500px;top:12.500px" width="25" height="22" viewBox="0 0 25 22"><path d="M0 2q0-1.500 1.500-1.500h6.500l2.500 2.500H23.500Q25 3 25 4.500V8H0z" fill="#e8a417"/><rect x="0" y="5" width="25" height="17" rx="1.500" fill="#ffcf3a"/><rect x="5" y="15" width="15" height="7" rx="1.500" fill="#2a8ae8"/></svg>
<svg style="left:835px;top:12.500px" width="24" height="22" viewBox="0 0 24 22"><path d="M0 8L12 0.500 24 8z" fill="#0f5aa6"/><rect x="0" y="7" width="24" height="15" rx="1" fill="#1a8ae0"/><path d="M0 7.500L12 16 24 7.500V9L12 18 0 9z" fill="#6fd0fb"/><path d="M0 7.500L12 16 24 7.500" fill="#3ab0f0"/></svg>
<svg style="left:878.500px;top:12px" width="25" height="25" viewBox="0 0 25 25"><defs><linearGradient id="wp" x1="0" y1="0" x2="0" y2="1"><stop offset="0" stop-color="#ff5a2a"/><stop offset="1" stop-color="#e01a1a"/></linearGradient></defs><circle cx="12.500" cy="12.500" r="12" fill="url(#wp)"/><path d="M4.500 7.500h2.800l2 7.500 2.400-7.500h2l2.300 7.500 2-7.500h2.700l-3.400 10.500h-2.400l-2.200-6.800-2.300 6.800H8z" fill="#fff"/></svg>
<svg style="left:923px;top:12px" width="26" height="26" viewBox="0 0 26 26"><circle cx="19" cy="5.500" r="3.500" fill="#7b83eb"/><circle cx="24" cy="7" r="2" fill="#5059c9"/><path d="M13 9.500h9.500q1.200 0 1.200 1.200V18q0 5.500-5.400 5.500T13 18z" fill="#7b83eb"/><path d="M22 10h3.300q0.700 0 0.700 0.700V16q0 3.500-3 3.500-1 0-1-0.500z" fill="#5059c9"/><rect x="0" y="6" width="15" height="15" rx="1.200" fill="#fff" stroke="#d8d8e8" stroke-width="0.500"/><path d="M3.800 9.500h7.400v2H8.600v7H6.400v-7H3.800z" fill="#4b53bc"/></svg>
<svg style="left:967.5px;top:12px" width="25" height="25" viewBox="0 0 25 25"><circle cx="12.500" cy="12.500" r="12" fill="#fff"/><path d="M12.500 0.500A12 12 0 0 1 22.900 6.500H12.500A6 6 0 0 0 7.300 9.500L2.100 6.500A12 12 0 0 1 12.500 0.500z" fill="#e33b2e"/><path d="M22.900 6.500A12 12 0 0 1 12.500 24.500L17.700 15.500A6 6 0 0 0 17.700 9.500L12.500 6.500z" fill="#fcc934"/><path d="M2.100 6.500L7.300 15.500A6 6 0 0 0 12.500 18.500 6 6 0 0 0 17.700 15.500L12.500 24.500A12 12 0 0 1 2.100 6.500z" fill="#2da94f"/><circle cx="12.500" cy="12.500" r="5.800" fill="#fff"/><circle cx="12.500" cy="12.500" r="4.600" fill="#4a8af4"/></svg><div style="left:980.5px;top:7px;width:15px;height:15px;border-radius:50%;background:radial-gradient(circle at 40% 40%,#e8e8e8 0,#9a9a9a 60%,#555 100%);box-shadow:0 0 0 0.500px #888"></div>
<div style="left:1002.500px;top:4px;width:40px;height:40px;border-radius:4px;background:#fbe6e6;box-shadow:0 0 0 0.500px #f0d4d4"></div>
<svg style="left:1010.500px;top:12px" width="25" height="25" viewBox="0 0 25 25"><defs><linearGradient id="zg2" x1="0" y1="0" x2="1" y2="1"><stop offset="0" stop-color="#2d7bff"/><stop offset="1" stop-color="#0b3fd8"/></linearGradient></defs><rect width="25" height="25" rx="10.500" fill="url(#zg2)"/><text x="12.300" y="16.800" font-size="13.500" font-weight="bold" fill="#fff" text-anchor="middle" font-family="Liberation Sans, sans-serif" style="position:static" letter-spacing="-0.600">zm</text></svg>
<div style="left:1015px;top:39.500px;width:16px;height:3px;border-radius:1.500px;background:#c42b1c"></div>
<svg style="left:1054.5px;top:12px" width="25" height="25" viewBox="0 0 25 25"><circle cx="12.500" cy="12.500" r="12" fill="#fff"/><path d="M12.500 0.500A12 12 0 0 1 22.900 6.500H12.500A6 6 0 0 0 7.300 9.500L2.100 6.500A12 12 0 0 1 12.500 0.500z" fill="#e33b2e"/><path d="M22.900 6.500A12 12 0 0 1 12.500 24.500L17.700 15.500A6 6 0 0 0 17.700 9.500L12.500 6.500z" fill="#fcc934"/><path d="M2.100 6.500L7.300 15.500A6 6 0 0 0 12.500 18.500 6 6 0 0 0 17.700 15.500L12.500 24.500A12 12 0 0 1 2.100 6.500z" fill="#2da94f"/><circle cx="12.500" cy="12.500" r="5.800" fill="#fff"/><circle cx="12.500" cy="12.500" r="4.600" fill="#4a8af4"/></svg>
<svg style="left:1098.500px;top:11.500px" width="25" height="26" viewBox="0 0 25 26"><defs><linearGradient id="sk" x1="0" y1="0" x2="0" y2="1"><stop offset="0" stop-color="#1ab7f0"/><stop offset="1" stop-color="#0a8ad8"/></linearGradient></defs><circle cx="8" cy="8" r="7.500" fill="url(#sk)"/><circle cx="17" cy="18" r="7.500" fill="url(#sk)"/><circle cx="12.500" cy="13" r="11" fill="url(#sk)"/><text x="12.500" y="19" font-size="17" font-weight="bold" fill="#fff" text-anchor="middle" font-family="Liberation Sans, sans-serif" style="position:static">S</text></svg>
<svg style="left:1143.500px;top:13px" width="25" height="22" viewBox="0 0 25 22"><circle cx="15.500" cy="3.500" r="3" fill="#ffb31a"/><path d="M0 21L8 6l5 8 3-4.500L24.500 21z" fill="#7a5ae0"/><path d="M8 6l5 8-4 7H5.500z" fill="#9b7af5"/><path d="M16 9.500L24.500 21h-9l-2.500-4z" fill="#a08af8"/></svg>
<div style="left:888px;top:40px;width:6px;height:2.500px;border-radius:1.200px;background:#8a8a8a"></div>
<div style="left:978px;top:40px;width:6px;height:2.500px;border-radius:1.200px;background:#8a8a8a"></div>
<div style="left:1064px;top:40px;width:6px;height:2.500px;border-radius:1.200px;background:#8a8a8a"></div>
<div style="left:1108px;top:40px;width:6px;height:2.500px;border-radius:1.200px;background:#8a8a8a"></div>
<div style="left:1152.5px;top:40px;width:6px;height:2.500px;border-radius:1.200px;background:#8a8a8a"></div>
<svg style="left:1241px;top:20.500px" width="12" height="8" viewBox="0 0 12 8"><path d="M1 7l5-5.500L11 7" stroke="#222" stroke-width="1.300" fill="none"/></svg>
<svg style="left:1270px;top:15px" width="19" height="19" viewBox="0 0 19 19" fill="none" stroke="#222" stroke-width="1.200"><path d="M2 8a7 7 0 0 1 12.500-3.500M15 1v4h-4M15 11a7 7 0 0 1-11.500 3.500M3 18v-4h4"/><circle cx="13" cy="13.500" r="3.800" fill="#f59a1a" stroke="none"/></svg>
<svg style="left:1304px;top:15.500px" width="12" height="18" viewBox="0 0 12 18" fill="none" stroke="#2a6ad0" stroke-width="1.400"><rect x="3.500" y="0.800" width="5" height="10" rx="2.500"/><path d="M1 8a5 5 0 0 0 10 0M6 13v4"/></svg>
<div class="t" id="ukr" style="left:1339px;top:19px;font-size:11.500px;color:#222;letter-spacing:-0.59px">УКР</div>
<svg style="left:1378.500px;top:16.500px" width="17" height="14" viewBox="0 0 17 14" fill="none" stroke="#222" stroke-width="1.300"><path d="M1 5a10.500 10.500 0 0 1 15 0M3.500 7.800a7 7 0 0 1 10 0M6 10.400a3.500 3.500 0 0 1 5 0"/><circle cx="8.500" cy="12.500" r="1" fill="#222" stroke="none"/></svg>
<svg style="left:1402.500px;top:16.500px" width="17" height="14" viewBox="0 0 17 14" fill="none" stroke="#222" stroke-width="1.100"><path d="M1 5h2.500L7 1.500v11L3.500 9H1z"/><path d="M9.500 4.500a3.500 3.500 0 0 1 0 5M11.500 2.800a6 6 0 0 1 0 8.400M13.500 1a8.500 8.500 0 0 1 0 12"/></svg>
<svg style="left:1426.500px;top:16.500px" width="18" height="13" viewBox="0 0 18 13"><rect x="1" y="4" width="14" height="8" rx="1.500" fill="#222"/><rect x="15.500" y="6.500" width="1.800" height="3" rx="0.600" fill="#222"/><path d="M3.500 0.500v4.500l-2.500-1M3.500 0.500L6 3" stroke="#222" stroke-width="1.100" fill="none"/></svg>
<div class="t" id="clk" style="left:1417px;top:10px;width:100px;text-align:right;font-size:12px;color:#222;letter-spacing:-0.29px"><span>16:14</span></div>
<div class="t" id="dat" style="left:1417px;top:26px;width:100px;text-align:right;font-size:12px;color:#222;letter-spacing:-0.25px"><span>13.05.2024</span></div>
<svg style="left:1525px;top:15.500px" width="16" height="18" viewBox="0 0 16 18"><path d="M2 13V8a5.500 5.500 0 0 1 11 0v5l1.500 1.500H0.500z" fill="#222"/><path d="M5.500 15.500a2 2 0 0 0 4 0z" fill="#222"/><text x="11" y="6" font-size="6" font-weight="bold" fill="#222" font-family="Liberation Sans, sans-serif" style="position:static">z</text><text x="7.300" y="10.500" font-size="6" font-weight="bold" fill="#fff" font-family="Liberation Sans, sans-serif" style="position:static">z</text></svg>
<svg style="left:1557px;top:11px" width="27" height="28" viewBox="0 0 27 28"><defs><linearGradient id="cp1" x1="0" y1="0" x2="0.300" y2="1"><stop offset="0" stop-color="#2a7af0"/><stop offset="0.500" stop-color="#2fc0b4"/><stop offset="1" stop-color="#cfe04a"/></linearGradient><linearGradient id="cp2" x1="0" y1="0" x2="0.400" y2="1"><stop offset="0" stop-color="#f06ad8"/><stop offset="0.600" stop-color="#a85af0"/><stop offset="1" stop-color="#5a5af0"/></linearGradient></defs><path d="M8.500 1.500H15Q18 1.500 19 4.500L20.500 9.500H15.500L14 5Q13.500 4 12.500 4 11 4 10.500 5.500L7.500 15.500Q6.500 18.500 4 18.500H3Q0 18.500 1 15L4.500 4.500Q5.500 1.500 8.500 1.500z" fill="url(#cp1)"/><path d="M18 20.500H11.500Q8.500 20.500 7.500 17.500L6 12.500H11L12.500 17Q13 18 14 18 15.500 18 16 16.500L19 6.500Q20 3.500 22.500 3.500H23.500Q26.500 3.500 25.500 7L22 17.500Q21 20.500 18 20.500z" fill="url(#cp2)"/><rect x="6.500" y="17.500" width="20" height="9" rx="3" fill="#ffc81a"/><text x="16.500" y="24.600" font-size="7" font-weight="bold" fill="#1a1a1a" text-anchor="middle" font-family="Liberation Sans, sans-serif" style="position:static">PRE</text></svg>
</div>
</div>
</body></html>
